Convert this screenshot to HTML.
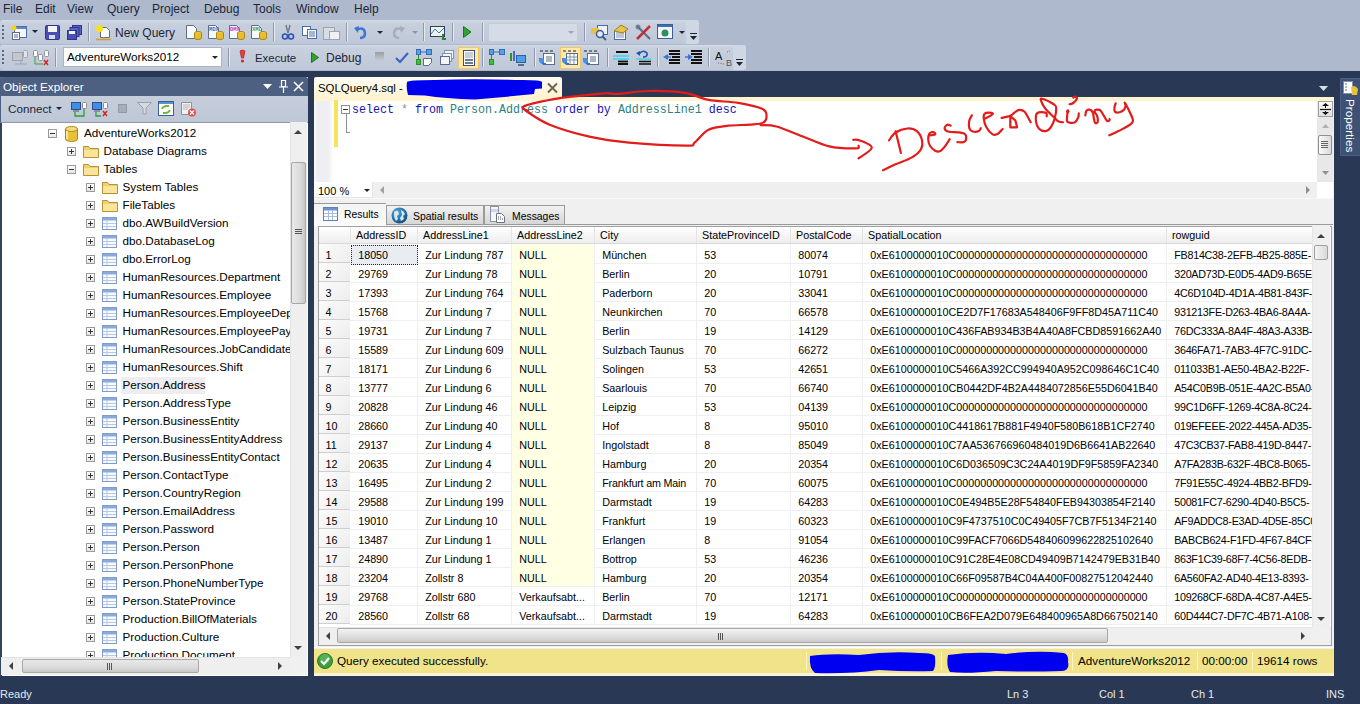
<!DOCTYPE html><html><head><meta charset="utf-8"><style>
*{margin:0;padding:0;box-sizing:border-box}
html,body{width:1360px;height:704px;overflow:hidden;background:#293955;font-family:"Liberation Sans",sans-serif;font-size:11.7px;color:#000}
.a{position:absolute}
.t{position:absolute;white-space:nowrap;line-height:14px}
.menu{color:#1B2637;font-size:12px}
.tb{position:absolute;background:linear-gradient(#D4DBE7,#C8D0DE 3px,#BFC8D8);border-radius:3px}
.sep{position:absolute;width:2px;border-left:1px solid #8E99AE;border-right:1px solid #E6EBF3}
.grip{position:absolute;width:2px;background:repeating-linear-gradient(#5A677D 0 2px,transparent 2px 4px)}
svg{position:absolute;overflow:visible}
.pm{position:absolute;width:9px;height:9px;border:1px solid #9A9A9A;background:linear-gradient(#FFFFFF,#E6E6E6)}
.pm:before{content:"";position:absolute;left:1px;top:3px;width:5px;height:1px;background:#333}
.pm.p:after{content:"";position:absolute;left:3px;top:1px;width:1px;height:5px;background:#333}
.g{position:absolute;white-space:nowrap;font-size:10.75px;line-height:13px;color:#000;transform:scaleY(1.1)}
</style></head><body>
<div class="a" style="left:0;top:0;width:1360px;height:71px;background:#AEB9CD"></div>
<div class="t menu" style="left:3px;top:2px">File</div>
<div class="t menu" style="left:35px;top:2px">Edit</div>
<div class="t menu" style="left:67px;top:2px">View</div>
<div class="t menu" style="left:107px;top:2px">Query</div>
<div class="t menu" style="left:152px;top:2px">Project</div>
<div class="t menu" style="left:204px;top:2px">Debug</div>
<div class="t menu" style="left:253px;top:2px">Tools</div>
<div class="t menu" style="left:296px;top:2px">Window</div>
<div class="t menu" style="left:354px;top:2px">Help</div>
<div class="tb" style="left:0;top:20px;width:699px;height:24px"></div>
<div class="a" style="left:686px;top:20px;width:13px;height:24px;background:#CFD6E4;border-radius:0 3px 3px 0"></div>
<div class="tb" style="left:0;top:45px;width:746px;height:25px"></div>
<div class="a" style="left:733px;top:45px;width:13px;height:25px;background:#CFD6E4;border-radius:0 3px 3px 0"></div>
<div class="grip" style="left:2px;top:25px;height:15px"></div>
<div class="grip" style="left:2px;top:50px;height:15px"></div>
<div class="sep" style="left:88px;top:23px;height:18px"></div>
<div class="sep" style="left:273px;top:23px;height:18px"></div>
<div class="sep" style="left:346px;top:23px;height:18px"></div>
<div class="sep" style="left:423px;top:23px;height:18px"></div>
<div class="sep" style="left:452px;top:23px;height:18px"></div>
<div class="sep" style="left:482px;top:23px;height:18px"></div>
<div class="sep" style="left:584px;top:23px;height:18px"></div>
<div class="sep" style="left:55px;top:48px;height:19px"></div>
<div class="sep" style="left:228px;top:48px;height:19px"></div>
<div class="sep" style="left:482px;top:48px;height:19px"></div>
<div class="sep" style="left:534px;top:48px;height:19px"></div>
<div class="sep" style="left:607px;top:48px;height:19px"></div>
<div class="sep" style="left:657px;top:48px;height:19px"></div>
<div class="sep" style="left:708px;top:48px;height:19px"></div>
<svg style="left:11px;top:25px" width="17" height="15"><rect x="3.5" y="1.5" width="12" height="11" fill="#F4F7FC" stroke="#4F6CA8"/><rect x="4" y="2" width="11" height="2" fill="#5C86D0"/><rect x="1.5" y="7.5" width="7" height="7" fill="#fff" stroke="#5A6C8C"/><path d="M3 10h4M3 12h4" stroke="#5A6C8C"/><circle cx="3" cy="3" r="2.5" fill="#F7D417"/></svg>
<svg style="left:32px;top:30px" width="6" height="4"><path d="M0 0H6L3 3Z" fill="#1B2637"/></svg>
<svg style="left:45px;top:25px" width="15" height="15"><rect x="0.5" y="0.5" width="14" height="14" rx="1" fill="#4850B8" stroke="#2E3590"/><rect x="3" y="1" width="9" height="6" fill="#F2F4FA"/><rect x="4" y="10" width="6" height="4" fill="#D8DBEE"/></svg>
<svg style="left:67px;top:25px" width="15" height="15"><rect x="5.5" y="0.5" width="9" height="9" fill="#5A62C4" stroke="#2E3590"/><rect x="3" y="2.5" width="9" height="9" fill="#5A62C4" stroke="#2E3590"/><rect x="0.5" y="5.5" width="9" height="9" fill="#4850B8" stroke="#2E3590"/><rect x="2" y="6" width="6" height="3" fill="#F2F4FA"/></svg>
<svg style="left:95px;top:24px" width="17" height="17"><path d="M5.5 3.5h6l3 3v7h-9z" fill="#fff" stroke="#6B6B6B"/><circle cx="4.5" cy="4.5" r="3.5" fill="#F9E01E"/><path d="M1 15.5h15" stroke="#C8A23A" stroke-width="1.5"/><path d="M9 13v3" stroke="#C8A23A"/></svg>
<div class="t menu" style="left:115px;top:26px">New Query</div>
<svg style="left:186px;top:25px" width="16" height="15"><path d="M0.5 0.5h7l3 3v10h-10z" fill="#F8F9FC" stroke="#5F6D86"/><ellipse cx="12" cy="8" rx="3.5" ry="1.5" fill="#F2D04A" stroke="#A8861A"/><path d="M8.5 8v5a3.5 1.5 0 0 0 7 0V8" fill="#E8BE2A" stroke="#A8861A"/></svg>
<svg style="left:208px;top:25px" width="16" height="15"><path d="M0.5 0.5h7l3 3v10h-10z" fill="#F8F9FC" stroke="#5F6D86"/><text x="1" y="6" font-family="Liberation Mono" font-size="5.5" font-weight="bold" fill="#3A6FBF">MDX</text><ellipse cx="12" cy="8" rx="3.5" ry="1.5" fill="#F2D04A" stroke="#A8861A"/><path d="M8.5 8v5a3.5 1.5 0 0 0 7 0V8" fill="#E8BE2A" stroke="#A8861A"/></svg>
<svg style="left:229px;top:25px" width="16" height="15"><path d="M0.5 0.5h7l3 3v10h-10z" fill="#F8F9FC" stroke="#5F6D86"/><text x="1" y="6" font-family="Liberation Mono" font-size="5.5" font-weight="bold" fill="#C040C0">DMX</text><ellipse cx="12" cy="8" rx="3.5" ry="1.5" fill="#F2D04A" stroke="#A8861A"/><path d="M8.5 8v5a3.5 1.5 0 0 0 7 0V8" fill="#E8BE2A" stroke="#A8861A"/></svg>
<svg style="left:251px;top:25px" width="16" height="15"><path d="M0.5 0.5h7l3 3v10h-10z" fill="#F8F9FC" stroke="#5F6D86"/><text x="1" y="6" font-family="Liberation Mono" font-size="5.5" font-weight="bold" fill="#3FA050">XML</text><ellipse cx="12" cy="8" rx="3.5" ry="1.5" fill="#F2D04A" stroke="#A8861A"/><path d="M8.5 8v5a3.5 1.5 0 0 0 7 0V8" fill="#E8BE2A" stroke="#A8861A"/></svg>
<svg style="left:282px;top:25px" width="12" height="15"><path d="M4 0L6 8M8 0L6 8" stroke="#6E7D92" stroke-width="1.5"/><circle cx="3" cy="11.5" r="2.5" fill="none" stroke="#2D55B5" stroke-width="1.6"/><circle cx="9" cy="11.5" r="2.5" fill="none" stroke="#2D55B5" stroke-width="1.6"/></svg>
<svg style="left:302px;top:26px" width="15" height="13"><rect x="0.5" y="0.5" width="8" height="9" fill="#fff" stroke="#4A6BA8"/><rect x="5.5" y="3.5" width="9" height="9" fill="#fff" stroke="#4A6BA8"/><path d="M7 6h6M7 8h6M7 10h6" stroke="#4A6BA8"/></svg>
<svg style="left:323px;top:25px" width="17" height="15"><rect x="0.5" y="2.5" width="11" height="12" fill="#D8DCE3" stroke="#9CA3AE"/><rect x="6.5" y="6.5" width="10" height="8" fill="#EEF0F3" stroke="#9CA3AE"/></svg>
<svg style="left:354px;top:25px" width="14" height="15"><path d="M2 5 Q10 1 11 8 Q11 13 6 13" fill="none" stroke="#3F74D0" stroke-width="2.5"/><path d="M0 3L5 1L4 8Z" fill="#3F74D0"/></svg>
<svg style="left:377px;top:31px" width="6" height="4"><path d="M0 0H6L3 3Z" fill="#1B2637"/></svg>
<svg style="left:391px;top:25px" width="14" height="15"><path d="M12 5 Q4 1 3 8 Q3 13 8 13" fill="none" stroke="#A4AEBD" stroke-width="2.5"/><path d="M14 3L9 1L10 8Z" fill="#A4AEBD"/></svg>
<svg style="left:412px;top:31px" width="6" height="4"><path d="M0 0H6L3 3Z" fill="#8A94A4"/></svg>
<svg style="left:430px;top:25px" width="17" height="15"><rect x="0.5" y="1.5" width="14" height="10" fill="#EAF3EA" stroke="#2F3F5F"/><path d="M1 9L5 4L9 8L14 3" stroke="#3F74D0" fill="none"/><path d="M13 9v5h3" stroke="#2F7F2F" stroke-width="2" fill="none"/></svg>
<svg style="left:463px;top:26px" width="9" height="12"><path d="M0.5 0.5L8 6L0.5 11.5Z" fill="#2FA32F" stroke="#1F731F"/></svg>
<div class="a" style="left:488px;top:23px;width:90px;height:19px;background:#D5DCE8;border:1px solid #C4CCDA;border-radius:2px"></div>
<svg style="left:568px;top:31px" width="6" height="4"><path d="M0 0H6L3 3Z" fill="#9AA3B2"/></svg>
<svg style="left:591px;top:25px" width="17" height="16"><rect x="6.5" y="0.5" width="10" height="9" fill="#EEF3FB" stroke="#4A6BA8"/><rect x="0" y="3" width="8" height="6" fill="#E8C24A"/><circle cx="9" cy="9" r="3.5" fill="#DDEBF7" stroke="#3B5E94" stroke-width="1.5"/><path d="M11.5 11.5L15 15" stroke="#3B5E94" stroke-width="2"/></svg>
<svg style="left:612px;top:25px" width="17" height="15"><rect x="2.5" y="5.5" width="11" height="9" fill="#fff" stroke="#4A6BA8"/><path d="M4 8h8M4 10h8M4 12h8" stroke="#7E8CA8"/><path d="M2 6L9 0L16 4L11 8Z" fill="#E8C24A" stroke="#9E7E20"/></svg>
<svg style="left:635px;top:25px" width="17" height="15"><path d="M2 1L15 14" stroke="#5A6C8C" stroke-width="2"/><path d="M15 1L2 14" stroke="#C03030" stroke-width="2.5"/><circle cx="3" cy="2" r="2" fill="none" stroke="#5A6C8C"/></svg>
<svg style="left:657px;top:24px" width="17" height="15"><rect x="0.5" y="0.5" width="15" height="14" fill="#F2F5FA" stroke="#3B5E94"/><rect x="1" y="1" width="14" height="2" fill="#3F6EC0"/><circle cx="8" cy="9" r="3.5" fill="#2F8F5F"/></svg>
<svg style="left:679px;top:31px" width="6" height="4"><path d="M0 0H6L3 3Z" fill="#1B2637"/></svg>
<svg style="left:690px;top:33px" width="8" height="8"><rect x="0" y="0" width="7" height="1" fill="#1B2637"/><path d="M0 3H7L3.5 7Z" fill="#1B2637"/></svg>
<svg style="left:12px;top:50px" width="16" height="15"><rect x="0.5" y="2.5" width="10" height="8" fill="#C4C8CE" stroke="#9CA3AE"/><rect x="11.5" y="0.5" width="4" height="7" rx="1" fill="#E0E3E8" stroke="#A0A6B0"/><path d="M3 14h12M9 11v3" stroke="#9CA3AE"/></svg>
<svg style="left:33px;top:50px" width="16" height="16"><rect x="0.5" y="0.5" width="4" height="6" rx="1" fill="#fff" stroke="#8A9099"/><rect x="5.5" y="4.5" width="4" height="6" rx="1" fill="#fff" stroke="#8A9099"/><rect x="11.5" y="0.5" width="4" height="6" rx="1" fill="#fff" stroke="#8A9099"/><path d="M2 7v7h8" stroke="#3FA03F" fill="none"/><path d="M11 10L15 15M15 10L11 15" stroke="#E02020" stroke-width="1.5"/></svg>
<div class="a" style="left:63px;top:47px;width:159px;height:20px;background:#fff;border:1px solid #A9B4C6"></div>
<div class="t" style="left:67px;top:50px;font-size:11.7px">AdventureWorks2012</div>
<svg style="left:212px;top:56px" width="6" height="4"><path d="M0 0H6L3 3Z" fill="#1B2637"/></svg>
<svg style="left:239px;top:50px" width="7" height="13"><path d="M1 1Q3.5 -1 6 1L4.5 8H2.5Z" fill="#E84040" stroke="#B02020" stroke-width="0.7"/><circle cx="3.5" cy="11" r="1.6" fill="#D03030"/></svg>
<div class="t menu" style="left:255px;top:51px;font-size:11.4px">Execute</div>
<svg style="left:311px;top:52px" width="8" height="11"><path d="M0.5 0.5L7.5 5.5L0.5 10.5Z" fill="#2FA32F" stroke="#1F731F"/></svg>
<div class="t menu" style="left:326px;top:51px">Debug</div>
<div class="a" style="left:375px;top:52px;width:9px;height:9px;background:linear-gradient(#9A9FA8,#C8CCD2)"></div>
<svg style="left:395px;top:52px" width="14" height="12"><path d="M1 6L5 10L13 1" fill="none" stroke="#3B64C4" stroke-width="2.2"/></svg>
<svg style="left:416px;top:49px" width="16" height="17"><rect x="0.5" y="0.5" width="4" height="5" fill="#5AA0E8" stroke="#2F6FB8"/><rect x="10.5" y="0.5" width="5" height="5" fill="#5AA0E8" stroke="#2F6FB8"/><path d="M5 3h5" stroke="#2F6FB8"/><rect x="0.5" y="10.5" width="4" height="5" fill="#3FBF3F" stroke="#2F8F2F"/><path d="M2.5 6v4" stroke="#2F8F2F"/><path d="M7.5 9.5h8v4l-3 3h-5z" fill="#fff" stroke="#5A6C8C"/></svg>
<svg style="left:440px;top:50px" width="14" height="15"><rect x="4.5" y="0.5" width="9" height="8" fill="#F2F5FA" stroke="#7F93B8"/><rect x="2.5" y="3.5" width="9" height="8" fill="#F2F5FA" stroke="#7F93B8"/><rect x="0.5" y="6.5" width="9" height="8" fill="#F2F5FA" stroke="#5A6C8C"/></svg>
<div class="a" style="left:458px;top:47px;width:21px;height:22px;background:#FDE9A8;border:1px solid #F1C565"></div>
<svg style="left:463px;top:50px" width="12" height="16"><rect x="0.5" y="0.5" width="11" height="15" fill="#fff" stroke="#3F4F6F"/><path d="M2 3h8M2 5h8M2 7h8" stroke="#8F9FB8"/><path d="M2 10h8M2 13h8" stroke="#3F4F6F" stroke-width="1.5"/></svg>
<svg style="left:489px;top:49px" width="16" height="17"><rect x="0.5" y="0.5" width="4" height="5" fill="#5AA0E8" stroke="#2F6FB8"/><rect x="10.5" y="0.5" width="5" height="5" fill="#5AA0E8" stroke="#2F6FB8"/><path d="M5 3h5" stroke="#2F6FB8"/><rect x="0.5" y="10.5" width="4" height="5" fill="#3FBF3F" stroke="#2F8F2F"/><path d="M2.5 6v4" stroke="#2F8F2F"/></svg>
<svg style="left:510px;top:50px" width="17" height="16"><rect x="0" y="3" width="2" height="8" fill="#2F8F2F"/><rect x="3" y="1" width="2" height="10" fill="#3F6EC0"/><rect x="6.5" y="5.5" width="9" height="7" fill="#4F9FE8" stroke="#2F5F9F"/><path d="M8 15h6" stroke="#5A6C8C" stroke-width="2"/></svg>
<svg style="left:539px;top:49px" width="17" height="17"><path d="M1 2h3M6 2h3M11 2h3" stroke="#222" stroke-width="1"/><rect x="4.5" y="4.5" width="11" height="11" fill="#fff" stroke="#5A6C8C"/><path d="M7 8h6M7 10h6M7 12h6" stroke="#5A6C8C"/><path d="M1 9Q1 15 7 15" fill="none" stroke="#2F6FD8" stroke-width="2"/><circle cx="2.5" cy="11.5" r="2.5" fill="#4F8FE0"/></svg>
<div class="a" style="left:560px;top:47px;width:21px;height:22px;background:#FDE9A8;border:1px solid #F1C565"></div>
<svg style="left:562px;top:49px" width="17" height="17"><path d="M1 2h3M6 2h3M11 2h3" stroke="#222" stroke-width="1"/><rect x="4.5" y="4.5" width="11" height="11" fill="#fff" stroke="#5A6C8C"/><path d="M5 8h10M5 11h10M8 5v10M12 5v10" stroke="#7F93B8"/><path d="M1 9Q1 15 7 15" fill="none" stroke="#2F6FD8" stroke-width="2"/><circle cx="2.5" cy="11.5" r="2.5" fill="#4F8FE0"/></svg>
<svg style="left:583px;top:49px" width="17" height="17"><path d="M1 2h3M6 2h3M11 2h3" stroke="#222" stroke-width="1"/><rect x="4.5" y="4.5" width="11" height="11" fill="#fff" stroke="#5A6C8C"/><path d="M7 8h6M7 10h6M7 12h6" stroke="#5A6C8C"/><path d="M1 9Q1 15 7 15" fill="none" stroke="#2F6FD8" stroke-width="2"/><circle cx="2.5" cy="11.5" r="2.5" fill="#4F8FE0"/></svg>
<svg style="left:613px;top:51px" width="17" height="14"><path d="M3 1h12M5 13h10" stroke="#111" stroke-width="1.8"/><path d="M0 5h16M0 8h16" stroke="#5FD0E8" stroke-width="1.8"/><path d="M5 10.5h10" stroke="#111" stroke-width="1.8"/></svg>
<svg style="left:635px;top:50px" width="17" height="15"><path d="M4 4 Q8 -1 12 3 Q13 7 8 7" fill="none" stroke="#1F4FB8" stroke-width="1.6"/><path d="M1 3L5 1L5 6Z" fill="#1F4FB8"/><path d="M1 9h15" stroke="#5FD0E8" stroke-width="1.8"/><path d="M4 11.5h12M4 14h12" stroke="#111" stroke-width="1.6"/></svg>
<svg style="left:663px;top:50px" width="17" height="15"><path d="M6 1h11M6 4h11M9 7h8M6 10h11M6 13h11" stroke="#111" stroke-width="1.8"/><path d="M0 7L5 4V10Z" fill="#3F74D0"/><path d="M4 7h4" stroke="#3F74D0" stroke-width="1.5"/></svg>
<svg style="left:685px;top:50px" width="18" height="15"><path d="M6 1h11M6 4h11M9 7h8M6 10h11M6 13h11" stroke="#111" stroke-width="1.8"/><path d="M8 7L3 4V10Z" fill="#3F74D0"/><path d="M0 7h4" stroke="#3F74D0" stroke-width="1.5"/></svg>
<svg style="left:715px;top:50px" width="20" height="17"><text x="0" y="10" font-family="Liberation Sans" font-size="11" fill="#111">A</text><text x="11" y="16" font-family="Liberation Sans" font-size="9" fill="#555">B</text><path d="M12 2l3-1M3 13l6 1" stroke="#666" stroke-dasharray="1 1.5" fill="none"/></svg>
<svg style="left:736px;top:59px" width="8" height="8"><rect x="0" y="0" width="7" height="1" fill="#1B2637"/><path d="M0 3H7L3.5 7Z" fill="#1B2637"/></svg>
<div class="a" style="left:0;top:77px;width:308px;height:599px;background:#fff;border-left:1px solid #4D6082"></div>
<div class="a" style="left:0;top:77px;width:308px;height:19px;background:#4D6082;border-radius:2px 2px 0 0"></div>
<div class="t" style="left:3px;top:80px;color:#fff;font-size:11.7px">Object Explorer</div>
<svg style="left:263px;top:84px" width="9" height="6"><path d="M0 0H9L4.5 5Z" fill="#fff"/></svg>
<svg style="left:279px;top:80px" width="9" height="13"><path d="M2.5 0.5h4v6h-4z M0 7h9 M4.5 7v6" fill="none" stroke="#fff" stroke-width="1.2"/></svg>
<svg style="left:293px;top:81px" width="11" height="11"><path d="M1 1L10 10M10 1L1 10" stroke="#fff" stroke-width="1.5"/></svg>
<div class="a" style="left:0;top:96px;width:308px;height:27px;background:linear-gradient(#C6CEDC,#BEC7D6);border-bottom:1px solid #8E99AC;border-left:1px solid #4D6082"></div>
<div class="t" style="left:8px;top:102px;color:#1B2637;font-size:11.7px">Connect</div>
<svg style="left:56px;top:107px" width="6" height="4"><path d="M0 0H6L3 3Z" fill="#1B2637"/></svg>
<svg style="left:71px;top:102px" width="16" height="15"><rect x="0.5" y="0.5" width="9" height="7" fill="#3F8FE8" stroke="#2F4F8F"/><path d="M2 9h6" stroke="#555"/><rect x="11.5" y="0.5" width="4" height="6" rx="1" fill="#fff" stroke="#888"/><path d="M4 10v4h9V7" stroke="#2F9F2F" fill="none" stroke-width="1.3"/></svg>
<svg style="left:92px;top:102px" width="16" height="15"><rect x="0.5" y="0.5" width="9" height="7" fill="#3F8FE8" stroke="#2F4F8F"/><path d="M2 9h6" stroke="#555"/><rect x="11.5" y="0.5" width="4" height="6" rx="1" fill="#fff" stroke="#888"/><path d="M4 10v4h5" stroke="#2F9F2F" fill="none" stroke-width="1.3"/><path d="M11 9L15 14M15 9L11 14" stroke="#E02020" stroke-width="1.5"/></svg>
<div class="a" style="left:118px;top:104px;width:9px;height:9px;background:#A8AEB8;border:1px solid #9299A4"></div>
<svg style="left:137px;top:102px" width="15" height="13"><path d="M0.5 0.5h14L9 6v6l-3 0V6Z" fill="#D5DAE2" stroke="#9AA1AC"/></svg>
<svg style="left:158px;top:101px" width="17" height="15"><rect x="0.5" y="0.5" width="15" height="14" fill="#fff" stroke="#3B5E94"/><rect x="1" y="1" width="14" height="2" fill="#5B8FD8"/><path d="M4 8Q5 5 9 5L11 5M12 9Q11 12 7 12L5 12" fill="none" stroke="#6FB82F" stroke-width="1.8"/></svg>
<svg style="left:180px;top:101px" width="17" height="16"><path d="M1.5 1.5h10v12h-10z" fill="#F2F2F2" stroke="#8A8F99"/><path d="M3 4h7M3 6h7M3 8h5" stroke="#B0B5BE"/><circle cx="12" cy="11.5" r="4" fill="#E25050"/><path d="M10 9.5L14 13.5M14 9.5L10 13.5" stroke="#fff" stroke-width="1.2"/></svg>
<div class="a" style="left:1px;top:122px;width:289px;height:535px;overflow:hidden">
<div class="pm " style="left:47px;top:7px"></div>
<svg style="left:64px;top:4px" width="13" height="16"><path d="M0.5 3v10a6 2.5 0 0 0 12 0V3" fill="#E9C03A" stroke="#A88A1A"/><ellipse cx="6.5" cy="3" rx="6" ry="2.5" fill="#F6DD7A" stroke="#A88A1A"/><path d="M2 5v8" stroke="#FFF3B0" stroke-width="1.5"/></svg>
<div class="t" style="left:83px;top:4px;font-size:11.7px">AdventureWorks2012</div>
<div class="pm p" style="left:66px;top:25px"></div>
<svg style="left:82px;top:23px" width="16" height="13"><path d="M0.5 1.5h5l1.5 2h8.5v9h-15z" fill="#F0CF6E" stroke="#B8922E"/><path d="M1 5h14v7H1z" fill="#F8E49A"/></svg>
<div class="t" style="left:102.5px;top:22px;font-size:11.7px">Database Diagrams</div>
<div class="pm " style="left:66px;top:43px"></div>
<svg style="left:82px;top:41px" width="16" height="13"><path d="M0.5 1.5h5l1.5 2h8.5v9h-15z" fill="#F0CF6E" stroke="#B8922E"/><path d="M1 5h14v7H1z" fill="#F8E49A"/></svg>
<div class="t" style="left:102.5px;top:40px;font-size:11.7px">Tables</div>
<div class="pm p" style="left:85px;top:61px"></div>
<svg style="left:101px;top:59px" width="16" height="13"><path d="M0.5 1.5h5l1.5 2h8.5v9h-15z" fill="#F0CF6E" stroke="#B8922E"/><path d="M1 5h14v7H1z" fill="#F8E49A"/></svg>
<div class="t" style="left:121.5px;top:58px;font-size:11.7px">System Tables</div>
<div class="pm p" style="left:85px;top:79px"></div>
<svg style="left:101px;top:77px" width="16" height="13"><path d="M0.5 1.5h5l1.5 2h8.5v9h-15z" fill="#F0CF6E" stroke="#B8922E"/><path d="M1 5h14v7H1z" fill="#F8E49A"/></svg>
<div class="t" style="left:121.5px;top:76px;font-size:11.7px">FileTables</div>
<div class="pm p" style="left:85px;top:97px"></div>
<svg style="left:101px;top:95px" width="15" height="13"><rect x="0.5" y="0.5" width="14" height="12" fill="#F8FAFD" stroke="#7F9CCB"/><rect x="1" y="1" width="13" height="2.5" fill="#8AAADC"/><path d="M1 6.5h13M1 9.5h13M5 3v9" stroke="#B8C9E6"/></svg>
<div class="t" style="left:121.5px;top:94px;font-size:11.7px">dbo.AWBuildVersion</div>
<div class="pm p" style="left:85px;top:115px"></div>
<svg style="left:101px;top:113px" width="15" height="13"><rect x="0.5" y="0.5" width="14" height="12" fill="#F8FAFD" stroke="#7F9CCB"/><rect x="1" y="1" width="13" height="2.5" fill="#8AAADC"/><path d="M1 6.5h13M1 9.5h13M5 3v9" stroke="#B8C9E6"/></svg>
<div class="t" style="left:121.5px;top:112px;font-size:11.7px">dbo.DatabaseLog</div>
<div class="pm p" style="left:85px;top:133px"></div>
<svg style="left:101px;top:131px" width="15" height="13"><rect x="0.5" y="0.5" width="14" height="12" fill="#F8FAFD" stroke="#7F9CCB"/><rect x="1" y="1" width="13" height="2.5" fill="#8AAADC"/><path d="M1 6.5h13M1 9.5h13M5 3v9" stroke="#B8C9E6"/></svg>
<div class="t" style="left:121.5px;top:130px;font-size:11.7px">dbo.ErrorLog</div>
<div class="pm p" style="left:85px;top:151px"></div>
<svg style="left:101px;top:149px" width="15" height="13"><rect x="0.5" y="0.5" width="14" height="12" fill="#F8FAFD" stroke="#7F9CCB"/><rect x="1" y="1" width="13" height="2.5" fill="#8AAADC"/><path d="M1 6.5h13M1 9.5h13M5 3v9" stroke="#B8C9E6"/></svg>
<div class="t" style="left:121.5px;top:148px;font-size:11.7px">HumanResources.Department</div>
<div class="pm p" style="left:85px;top:169px"></div>
<svg style="left:101px;top:167px" width="15" height="13"><rect x="0.5" y="0.5" width="14" height="12" fill="#F8FAFD" stroke="#7F9CCB"/><rect x="1" y="1" width="13" height="2.5" fill="#8AAADC"/><path d="M1 6.5h13M1 9.5h13M5 3v9" stroke="#B8C9E6"/></svg>
<div class="t" style="left:121.5px;top:166px;font-size:11.7px">HumanResources.Employee</div>
<div class="pm p" style="left:85px;top:187px"></div>
<svg style="left:101px;top:185px" width="15" height="13"><rect x="0.5" y="0.5" width="14" height="12" fill="#F8FAFD" stroke="#7F9CCB"/><rect x="1" y="1" width="13" height="2.5" fill="#8AAADC"/><path d="M1 6.5h13M1 9.5h13M5 3v9" stroke="#B8C9E6"/></svg>
<div class="t" style="left:121.5px;top:184px;font-size:11.7px">HumanResources.EmployeeDepartmentHistory</div>
<div class="pm p" style="left:85px;top:205px"></div>
<svg style="left:101px;top:203px" width="15" height="13"><rect x="0.5" y="0.5" width="14" height="12" fill="#F8FAFD" stroke="#7F9CCB"/><rect x="1" y="1" width="13" height="2.5" fill="#8AAADC"/><path d="M1 6.5h13M1 9.5h13M5 3v9" stroke="#B8C9E6"/></svg>
<div class="t" style="left:121.5px;top:202px;font-size:11.7px">HumanResources.EmployeePayHistory</div>
<div class="pm p" style="left:85px;top:223px"></div>
<svg style="left:101px;top:221px" width="15" height="13"><rect x="0.5" y="0.5" width="14" height="12" fill="#F8FAFD" stroke="#7F9CCB"/><rect x="1" y="1" width="13" height="2.5" fill="#8AAADC"/><path d="M1 6.5h13M1 9.5h13M5 3v9" stroke="#B8C9E6"/></svg>
<div class="t" style="left:121.5px;top:220px;font-size:11.7px">HumanResources.JobCandidate</div>
<div class="pm p" style="left:85px;top:241px"></div>
<svg style="left:101px;top:239px" width="15" height="13"><rect x="0.5" y="0.5" width="14" height="12" fill="#F8FAFD" stroke="#7F9CCB"/><rect x="1" y="1" width="13" height="2.5" fill="#8AAADC"/><path d="M1 6.5h13M1 9.5h13M5 3v9" stroke="#B8C9E6"/></svg>
<div class="t" style="left:121.5px;top:238px;font-size:11.7px">HumanResources.Shift</div>
<div class="pm p" style="left:85px;top:259px"></div>
<svg style="left:101px;top:257px" width="15" height="13"><rect x="0.5" y="0.5" width="14" height="12" fill="#F8FAFD" stroke="#7F9CCB"/><rect x="1" y="1" width="13" height="2.5" fill="#8AAADC"/><path d="M1 6.5h13M1 9.5h13M5 3v9" stroke="#B8C9E6"/></svg>
<div class="a" style="left:119.5px;top:255px;width:84px;height:17px;background:#EEEEF0"></div>
<div class="t" style="left:121.5px;top:256px;font-size:11.7px">Person.Address</div>
<div class="pm p" style="left:85px;top:277px"></div>
<svg style="left:101px;top:275px" width="15" height="13"><rect x="0.5" y="0.5" width="14" height="12" fill="#F8FAFD" stroke="#7F9CCB"/><rect x="1" y="1" width="13" height="2.5" fill="#8AAADC"/><path d="M1 6.5h13M1 9.5h13M5 3v9" stroke="#B8C9E6"/></svg>
<div class="t" style="left:121.5px;top:274px;font-size:11.7px">Person.AddressType</div>
<div class="pm p" style="left:85px;top:295px"></div>
<svg style="left:101px;top:293px" width="15" height="13"><rect x="0.5" y="0.5" width="14" height="12" fill="#F8FAFD" stroke="#7F9CCB"/><rect x="1" y="1" width="13" height="2.5" fill="#8AAADC"/><path d="M1 6.5h13M1 9.5h13M5 3v9" stroke="#B8C9E6"/></svg>
<div class="t" style="left:121.5px;top:292px;font-size:11.7px">Person.BusinessEntity</div>
<div class="pm p" style="left:85px;top:313px"></div>
<svg style="left:101px;top:311px" width="15" height="13"><rect x="0.5" y="0.5" width="14" height="12" fill="#F8FAFD" stroke="#7F9CCB"/><rect x="1" y="1" width="13" height="2.5" fill="#8AAADC"/><path d="M1 6.5h13M1 9.5h13M5 3v9" stroke="#B8C9E6"/></svg>
<div class="t" style="left:121.5px;top:310px;font-size:11.7px">Person.BusinessEntityAddress</div>
<div class="pm p" style="left:85px;top:331px"></div>
<svg style="left:101px;top:329px" width="15" height="13"><rect x="0.5" y="0.5" width="14" height="12" fill="#F8FAFD" stroke="#7F9CCB"/><rect x="1" y="1" width="13" height="2.5" fill="#8AAADC"/><path d="M1 6.5h13M1 9.5h13M5 3v9" stroke="#B8C9E6"/></svg>
<div class="t" style="left:121.5px;top:328px;font-size:11.7px">Person.BusinessEntityContact</div>
<div class="pm p" style="left:85px;top:349px"></div>
<svg style="left:101px;top:347px" width="15" height="13"><rect x="0.5" y="0.5" width="14" height="12" fill="#F8FAFD" stroke="#7F9CCB"/><rect x="1" y="1" width="13" height="2.5" fill="#8AAADC"/><path d="M1 6.5h13M1 9.5h13M5 3v9" stroke="#B8C9E6"/></svg>
<div class="t" style="left:121.5px;top:346px;font-size:11.7px">Person.ContactType</div>
<div class="pm p" style="left:85px;top:367px"></div>
<svg style="left:101px;top:365px" width="15" height="13"><rect x="0.5" y="0.5" width="14" height="12" fill="#F8FAFD" stroke="#7F9CCB"/><rect x="1" y="1" width="13" height="2.5" fill="#8AAADC"/><path d="M1 6.5h13M1 9.5h13M5 3v9" stroke="#B8C9E6"/></svg>
<div class="t" style="left:121.5px;top:364px;font-size:11.7px">Person.CountryRegion</div>
<div class="pm p" style="left:85px;top:385px"></div>
<svg style="left:101px;top:383px" width="15" height="13"><rect x="0.5" y="0.5" width="14" height="12" fill="#F8FAFD" stroke="#7F9CCB"/><rect x="1" y="1" width="13" height="2.5" fill="#8AAADC"/><path d="M1 6.5h13M1 9.5h13M5 3v9" stroke="#B8C9E6"/></svg>
<div class="t" style="left:121.5px;top:382px;font-size:11.7px">Person.EmailAddress</div>
<div class="pm p" style="left:85px;top:403px"></div>
<svg style="left:101px;top:401px" width="15" height="13"><rect x="0.5" y="0.5" width="14" height="12" fill="#F8FAFD" stroke="#7F9CCB"/><rect x="1" y="1" width="13" height="2.5" fill="#8AAADC"/><path d="M1 6.5h13M1 9.5h13M5 3v9" stroke="#B8C9E6"/></svg>
<div class="t" style="left:121.5px;top:400px;font-size:11.7px">Person.Password</div>
<div class="pm p" style="left:85px;top:421px"></div>
<svg style="left:101px;top:419px" width="15" height="13"><rect x="0.5" y="0.5" width="14" height="12" fill="#F8FAFD" stroke="#7F9CCB"/><rect x="1" y="1" width="13" height="2.5" fill="#8AAADC"/><path d="M1 6.5h13M1 9.5h13M5 3v9" stroke="#B8C9E6"/></svg>
<div class="t" style="left:121.5px;top:418px;font-size:11.7px">Person.Person</div>
<div class="pm p" style="left:85px;top:439px"></div>
<svg style="left:101px;top:437px" width="15" height="13"><rect x="0.5" y="0.5" width="14" height="12" fill="#F8FAFD" stroke="#7F9CCB"/><rect x="1" y="1" width="13" height="2.5" fill="#8AAADC"/><path d="M1 6.5h13M1 9.5h13M5 3v9" stroke="#B8C9E6"/></svg>
<div class="t" style="left:121.5px;top:436px;font-size:11.7px">Person.PersonPhone</div>
<div class="pm p" style="left:85px;top:457px"></div>
<svg style="left:101px;top:455px" width="15" height="13"><rect x="0.5" y="0.5" width="14" height="12" fill="#F8FAFD" stroke="#7F9CCB"/><rect x="1" y="1" width="13" height="2.5" fill="#8AAADC"/><path d="M1 6.5h13M1 9.5h13M5 3v9" stroke="#B8C9E6"/></svg>
<div class="t" style="left:121.5px;top:454px;font-size:11.7px">Person.PhoneNumberType</div>
<div class="pm p" style="left:85px;top:475px"></div>
<svg style="left:101px;top:473px" width="15" height="13"><rect x="0.5" y="0.5" width="14" height="12" fill="#F8FAFD" stroke="#7F9CCB"/><rect x="1" y="1" width="13" height="2.5" fill="#8AAADC"/><path d="M1 6.5h13M1 9.5h13M5 3v9" stroke="#B8C9E6"/></svg>
<div class="t" style="left:121.5px;top:472px;font-size:11.7px">Person.StateProvince</div>
<div class="pm p" style="left:85px;top:493px"></div>
<svg style="left:101px;top:491px" width="15" height="13"><rect x="0.5" y="0.5" width="14" height="12" fill="#F8FAFD" stroke="#7F9CCB"/><rect x="1" y="1" width="13" height="2.5" fill="#8AAADC"/><path d="M1 6.5h13M1 9.5h13M5 3v9" stroke="#B8C9E6"/></svg>
<div class="t" style="left:121.5px;top:490px;font-size:11.7px">Production.BillOfMaterials</div>
<div class="pm p" style="left:85px;top:511px"></div>
<svg style="left:101px;top:509px" width="15" height="13"><rect x="0.5" y="0.5" width="14" height="12" fill="#F8FAFD" stroke="#7F9CCB"/><rect x="1" y="1" width="13" height="2.5" fill="#8AAADC"/><path d="M1 6.5h13M1 9.5h13M5 3v9" stroke="#B8C9E6"/></svg>
<div class="t" style="left:121.5px;top:508px;font-size:11.7px">Production.Culture</div>
<div class="pm p" style="left:85px;top:529px"></div>
<svg style="left:101px;top:527px" width="15" height="13"><rect x="0.5" y="0.5" width="14" height="12" fill="#F8FAFD" stroke="#7F9CCB"/><rect x="1" y="1" width="13" height="2.5" fill="#8AAADC"/><path d="M1 6.5h13M1 9.5h13M5 3v9" stroke="#B8C9E6"/></svg>
<div class="t" style="left:121.5px;top:526px;font-size:11.7px">Production.Document</div>
</div>
<div class="a" style="left:0;top:123px;width:2px;height:553px;background:#34445F"></div>
<div class="a" style="left:290px;top:122px;width:17px;height:535px;background:#EFEFEF;border-left:1px solid #E3E3E3"></div>
<svg style="left:294px;top:130px" width="8" height="4"><path d="M0 4H8L4 0Z" fill="#404040"/></svg>
<svg style="left:294px;top:646px" width="8" height="4"><path d="M0 0H8L4 4Z" fill="#404040"/></svg>
<div class="a" style="left:291px;top:162px;width:15px;height:142px;background:linear-gradient(90deg,#E8E8E8,#DCDCDC 60%,#C8C8C8);border:1px solid #A8A8A8;border-radius:2px"></div>
<svg style="left:295px;top:229px" width="7" height="6"><path d="M0 0.5h7M0 2.5h7M0 4.5h7" stroke="#555"/></svg>
<div class="a" style="left:1px;top:657px;width:306px;height:18px;background:#EFEFEF;border-top:1px solid #E3E3E3"></div>
<svg style="left:9px;top:662px" width="4" height="8"><path d="M4 0V8L0 4Z" fill="#404040"/></svg>
<svg style="left:278px;top:662px" width="4" height="8"><path d="M0 0V8L4 4Z" fill="#404040"/></svg>
<div class="a" style="left:22px;top:659px;width:177px;height:14px;background:linear-gradient(#E8E8E8,#DCDCDC 60%,#C8C8C8);border:1px solid #A8A8A8;border-radius:2px"></div>
<svg style="left:107px;top:663px" width="6" height="7"><path d="M0.5 0v7M2.5 0v7M4.5 0v7" stroke="#555"/></svg>
<div class="a" style="left:290px;top:657px;width:17px;height:18px;background:#F0F0F0"></div>
<div class="a" style="left:314px;top:77px;width:248px;height:21px;background:linear-gradient(#FFFCF4,#FFF3D0);border-radius:2px 2px 0 0"></div>
<div class="t" style="left:318px;top:81px;font-size:11.4px">SQLQuery4.sql -</div>
<svg style="left:547px;top:83px" width="11" height="10"><path d="M1 0.5L10 9.5M10 0.5L1 9.5" stroke="#6B6450" stroke-width="1.9"/></svg>
<svg style="left:1319px;top:86px" width="9" height="6"><path d="M0 0H9L4.5 5Z" fill="#D8DEE8"/></svg>
<div class="a" style="left:314px;top:97px;width:1020px;height:579px;background:#F0F0F0"></div>
<div class="a" style="left:314px;top:97px;width:1020px;height:4px;background:#FFF3D0"></div>
<div class="a" style="left:314px;top:101px;width:1003px;height:81px;background:#fff"></div>
<div class="a" style="left:314px;top:101px;width:19px;height:81px;background:linear-gradient(90deg,#FAFAFA,#EFEFF3 20%,#EFEFF3 75%,#FDFDFD)"></div>
<div class="a" style="left:334px;top:100px;width:4px;height:47px;background:#F7E45A"></div>
<div class="a" style="left:341px;top:105px;width:9px;height:9px;border:1px solid #8F8F8F;background:#fff"></div>
<div class="a" style="left:343px;top:109px;width:5px;height:1px;background:#333"></div>
<div class="a" style="left:346px;top:114px;width:1px;height:19px;background:#909090"></div>
<div class="a" style="left:346px;top:132px;width:4px;height:1px;background:#909090"></div>
<div class="t" style="left:352px;top:102.5px;font-family:'Liberation Mono',monospace;font-size:11.67px;line-height:14px;transform:scaleY(1.12)"><span style="color:#1616B0">select</span> <span style="color:#909090">*</span> <span style="color:#1616B0">from</span> <span style="color:#2D8080">Person.Address</span> <span style="color:#1616B0">order by</span> <span style="color:#2D8080">AddressLine1</span> <span style="color:#1616B0">desc</span></div>
<div class="a" style="left:1317px;top:101px;width:16px;height:81px;background:#E8E8E8"></div>
<div class="a" style="left:1318px;top:101px;width:15px;height:16px;background:linear-gradient(#FAFAFA,#E0E0E0);border:1px solid #A0A0A0"></div>
<svg style="left:1320px;top:103px" width="11" height="13"><path d="M5.5 0L9 3H2Z M5.5 12L9 9H2Z" fill="#111"/><path d="M0 6.5h11" stroke="#111" stroke-width="1.2"/><path d="M5.5 2v3M5.5 8v3" stroke="#111"/></svg>
<svg style="left:1322px;top:124px" width="7" height="4"><path d="M0 4H7L3.5 0Z" fill="#B0B0B0"/></svg>
<div class="a" style="left:1318px;top:135px;width:14px;height:20px;background:linear-gradient(90deg,#FAFAFA,#DADADA);border:1px solid #909090;border-radius:2px"></div>
<svg style="left:1321px;top:141px" width="8" height="8"><path d="M0 0.5h7M0 2.5h7M0 4.5h7M0 6.5h7" stroke="#666"/></svg>
<svg style="left:1322px;top:171px" width="7" height="4"><path d="M0 0H7L3.5 4Z" fill="#909090"/></svg>
<div class="a" style="left:314px;top:182px;width:1003px;height:16px;background:#EFEFEF"></div>
<div class="a" style="left:314px;top:182px;width:59px;height:16px;background:#fff;border-bottom:1px solid #E4E4E4;border-right:1px solid #E4E4E4"></div>
<div class="t" style="left:318px;top:184px;font-size:11px">100 %</div>
<svg style="left:364px;top:189px" width="6" height="4"><path d="M0 0H6L3 3Z" fill="#222"/></svg>
<svg style="left:380px;top:186px" width="4" height="8"><path d="M4 0V8L0 4Z" fill="#A0A0A0"/></svg>
<svg style="left:1306px;top:186px" width="4" height="8"><path d="M0 0V8L4 4Z" fill="#909090"/></svg>
<div class="a" style="left:1317px;top:182px;width:16px;height:16px;background:#fff"></div>
<div class="a" style="left:314px;top:198px;width:1019px;height:1px;background:#F8F8F8"></div>
<div class="a" style="left:386px;top:224px;width:947px;height:1px;background:#9A9A9A"></div>
<div class="a" style="left:386px;top:205px;width:98px;height:20px;background:linear-gradient(#F2F2F2,#D6D6D6);border:1px solid #9A9A9A"></div>
<div class="a" style="left:484px;top:205px;width:81px;height:20px;background:linear-gradient(#F2F2F2,#D6D6D6);border:1px solid #9A9A9A"></div>
<div class="a" style="left:314px;top:203px;width:72px;height:23px;background:linear-gradient(#F4F4F4,#FBFBFB);border-top:1px solid #9A9A9A"></div>
<svg style="left:323px;top:207px" width="15" height="14"><rect x="0.5" y="0.5" width="14" height="13" fill="#fff" stroke="#5F7FB8"/><rect x="1" y="1" width="13" height="2.5" fill="#6F93D0"/><path d="M1 6.5h13M1 9.5h13M5.5 3v10M9.5 3v10" stroke="#A8BDE0"/></svg>
<div class="t" style="left:344px;top:208px;font-size:10.4px">Results</div>
<svg style="left:391px;top:207px" width="17" height="17"><defs><radialGradient id="gl" cx="0.35" cy="0.3" r="0.8"><stop offset="0" stop-color="#4FA8D8"/><stop offset="1" stop-color="#0F4A7A"/></radialGradient></defs><circle cx="8.5" cy="8.5" r="8" fill="url(#gl)"/><path d="M3 5Q5 3 7 4L8 7L6 9L7 12L5 14Q3 11 3 8Z" fill="#D8E8F0"/><path d="M10 3Q13 4 14 7L12 9L13 12L10 14L9 11L11 8Z" fill="#D8E8F0"/></svg>
<div class="t" style="left:413px;top:210px;font-size:10.4px">Spatial results</div>
<svg style="left:490px;top:206px" width="16" height="17"><rect x="0.5" y="0.5" width="8" height="15" fill="#F4F6FA" stroke="#8A94A6"/><rect x="1" y="3" width="7" height="3" fill="#C8D8F0"/><path d="M6.5 7.5h5l3 3v6h-8z" fill="#fff" stroke="#6A7486"/><path d="M8 11h1M10 11h1M8 13h1M10 13h1M12 13h1" stroke="#555"/></svg>
<div class="t" style="left:512px;top:210px;font-size:10.4px">Messages</div>
<div class="a" style="left:318px;top:226px;width:1014px;height:420px;background:#fff;border:1px solid #A0A0A0"></div>
<div class="a" style="left:319px;top:227px;width:993px;height:17px;background:linear-gradient(#FFFFFF,#F4F4F4 60%,#EEEEEE);border-bottom:1px solid #D8D8D8"></div>
<div class="a" style="left:350px;top:227px;width:1px;height:16px;background:#E4E4E4"></div>
<div class="g" style="left:356px;top:229px">AddressID</div>
<div class="a" style="left:417px;top:227px;width:1px;height:16px;background:#E4E4E4"></div>
<div class="g" style="left:423px;top:229px">AddressLine1</div>
<div class="a" style="left:511px;top:227px;width:1px;height:16px;background:#E4E4E4"></div>
<div class="g" style="left:517px;top:229px">AddressLine2</div>
<div class="a" style="left:594px;top:227px;width:1px;height:16px;background:#E4E4E4"></div>
<div class="g" style="left:600px;top:229px">City</div>
<div class="a" style="left:696px;top:227px;width:1px;height:16px;background:#E4E4E4"></div>
<div class="g" style="left:702px;top:229px">StateProvinceID</div>
<div class="a" style="left:790px;top:227px;width:1px;height:16px;background:#E4E4E4"></div>
<div class="g" style="left:796px;top:229px">PostalCode</div>
<div class="a" style="left:862px;top:227px;width:1px;height:16px;background:#E4E4E4"></div>
<div class="g" style="left:868px;top:229px">SpatialLocation</div>
<div class="a" style="left:1166px;top:227px;width:1px;height:16px;background:#E4E4E4"></div>
<div class="g" style="left:1172px;top:229px">rowguid</div>
<div class="a" style="left:319px;top:244px;width:31px;height:19px;background:linear-gradient(135deg,#FCFCFC,#EDEDED);border-bottom:1px solid #CFCFCF"></div>
<div class="g" style="left:325.5px;top:249px">1</div>
<div class="a" style="left:512px;top:244px;width:82px;height:19px;background:#FFFFE3"></div>
<div class="a" style="left:350px;top:263px;width:962px;height:1px;background:#EFEFEF"></div>
<div class="a" style="left:417px;top:244px;width:1px;height:19px;background:#EFEFEF"></div>
<div class="a" style="left:511px;top:244px;width:1px;height:19px;background:#EFEFEF"></div>
<div class="a" style="left:594px;top:244px;width:1px;height:19px;background:#EFEFEF"></div>
<div class="a" style="left:696px;top:244px;width:1px;height:19px;background:#EFEFEF"></div>
<div class="a" style="left:790px;top:244px;width:1px;height:19px;background:#EFEFEF"></div>
<div class="a" style="left:862px;top:244px;width:1px;height:19px;background:#EFEFEF"></div>
<div class="a" style="left:1166px;top:244px;width:1px;height:19px;background:#EFEFEF"></div>
<div class="g" style="left:358.2px;top:249px">18050</div>
<div class="g" style="left:425.2px;top:249px">Zur Lindung 787</div>
<div class="g" style="left:519.2px;top:249px">NULL</div>
<div class="g" style="left:602.2px;top:249px">München</div>
<div class="g" style="left:704.2px;top:249px">53</div>
<div class="g" style="left:798.2px;top:249px">80074</div>
<div class="g" style="left:870.2px;top:249px">0xE6100000010C00000000000000000000000000000000</div>
<div class="g" style="left:1174.2px;top:249px;letter-spacing:-0.25px">FB814C38-2EFB-4B25-885E-</div>
<div class="a" style="left:319px;top:263px;width:31px;height:19px;background:linear-gradient(135deg,#FCFCFC,#EDEDED);border-bottom:1px solid #CFCFCF"></div>
<div class="g" style="left:325.5px;top:268px">2</div>
<div class="a" style="left:512px;top:263px;width:82px;height:19px;background:#FFFFE3"></div>
<div class="a" style="left:350px;top:282px;width:962px;height:1px;background:#EFEFEF"></div>
<div class="a" style="left:417px;top:263px;width:1px;height:19px;background:#EFEFEF"></div>
<div class="a" style="left:511px;top:263px;width:1px;height:19px;background:#EFEFEF"></div>
<div class="a" style="left:594px;top:263px;width:1px;height:19px;background:#EFEFEF"></div>
<div class="a" style="left:696px;top:263px;width:1px;height:19px;background:#EFEFEF"></div>
<div class="a" style="left:790px;top:263px;width:1px;height:19px;background:#EFEFEF"></div>
<div class="a" style="left:862px;top:263px;width:1px;height:19px;background:#EFEFEF"></div>
<div class="a" style="left:1166px;top:263px;width:1px;height:19px;background:#EFEFEF"></div>
<div class="g" style="left:358.2px;top:268px">29769</div>
<div class="g" style="left:425.2px;top:268px">Zur Lindung 78</div>
<div class="g" style="left:519.2px;top:268px">NULL</div>
<div class="g" style="left:602.2px;top:268px">Berlin</div>
<div class="g" style="left:704.2px;top:268px">20</div>
<div class="g" style="left:798.2px;top:268px">10791</div>
<div class="g" style="left:870.2px;top:268px">0xE6100000010C00000000000000000000000000000000</div>
<div class="g" style="left:1174.2px;top:268px;letter-spacing:-0.25px">320AD73D-E0D5-4AD9-B65E-</div>
<div class="a" style="left:319px;top:282px;width:31px;height:19px;background:linear-gradient(135deg,#FCFCFC,#EDEDED);border-bottom:1px solid #CFCFCF"></div>
<div class="g" style="left:325.5px;top:287px">3</div>
<div class="a" style="left:512px;top:282px;width:82px;height:19px;background:#FFFFE3"></div>
<div class="a" style="left:350px;top:301px;width:962px;height:1px;background:#EFEFEF"></div>
<div class="a" style="left:417px;top:282px;width:1px;height:19px;background:#EFEFEF"></div>
<div class="a" style="left:511px;top:282px;width:1px;height:19px;background:#EFEFEF"></div>
<div class="a" style="left:594px;top:282px;width:1px;height:19px;background:#EFEFEF"></div>
<div class="a" style="left:696px;top:282px;width:1px;height:19px;background:#EFEFEF"></div>
<div class="a" style="left:790px;top:282px;width:1px;height:19px;background:#EFEFEF"></div>
<div class="a" style="left:862px;top:282px;width:1px;height:19px;background:#EFEFEF"></div>
<div class="a" style="left:1166px;top:282px;width:1px;height:19px;background:#EFEFEF"></div>
<div class="g" style="left:358.2px;top:287px">17393</div>
<div class="g" style="left:425.2px;top:287px">Zur Lindung 764</div>
<div class="g" style="left:519.2px;top:287px">NULL</div>
<div class="g" style="left:602.2px;top:287px">Paderborn</div>
<div class="g" style="left:704.2px;top:287px">20</div>
<div class="g" style="left:798.2px;top:287px">33041</div>
<div class="g" style="left:870.2px;top:287px">0xE6100000010C00000000000000000000000000000000</div>
<div class="g" style="left:1174.2px;top:287px;letter-spacing:-0.25px">4C6D104D-4D1A-4B81-843F-</div>
<div class="a" style="left:319px;top:301px;width:31px;height:19px;background:linear-gradient(135deg,#FCFCFC,#EDEDED);border-bottom:1px solid #CFCFCF"></div>
<div class="g" style="left:325.5px;top:306px">4</div>
<div class="a" style="left:512px;top:301px;width:82px;height:19px;background:#FFFFE3"></div>
<div class="a" style="left:350px;top:320px;width:962px;height:1px;background:#EFEFEF"></div>
<div class="a" style="left:417px;top:301px;width:1px;height:19px;background:#EFEFEF"></div>
<div class="a" style="left:511px;top:301px;width:1px;height:19px;background:#EFEFEF"></div>
<div class="a" style="left:594px;top:301px;width:1px;height:19px;background:#EFEFEF"></div>
<div class="a" style="left:696px;top:301px;width:1px;height:19px;background:#EFEFEF"></div>
<div class="a" style="left:790px;top:301px;width:1px;height:19px;background:#EFEFEF"></div>
<div class="a" style="left:862px;top:301px;width:1px;height:19px;background:#EFEFEF"></div>
<div class="a" style="left:1166px;top:301px;width:1px;height:19px;background:#EFEFEF"></div>
<div class="g" style="left:358.2px;top:306px">15768</div>
<div class="g" style="left:425.2px;top:306px">Zur Lindung 7</div>
<div class="g" style="left:519.2px;top:306px">NULL</div>
<div class="g" style="left:602.2px;top:306px">Neunkirchen</div>
<div class="g" style="left:704.2px;top:306px">70</div>
<div class="g" style="left:798.2px;top:306px">66578</div>
<div class="g" style="left:870.2px;top:306px">0xE6100000010CE2D7F17683A548406F9FF8D45A711C40</div>
<div class="g" style="left:1174.2px;top:306px;letter-spacing:-0.25px">931213FE-D263-4BA6-8A4A-</div>
<div class="a" style="left:319px;top:320px;width:31px;height:19px;background:linear-gradient(135deg,#FCFCFC,#EDEDED);border-bottom:1px solid #CFCFCF"></div>
<div class="g" style="left:325.5px;top:325px">5</div>
<div class="a" style="left:512px;top:320px;width:82px;height:19px;background:#FFFFE3"></div>
<div class="a" style="left:350px;top:339px;width:962px;height:1px;background:#EFEFEF"></div>
<div class="a" style="left:417px;top:320px;width:1px;height:19px;background:#EFEFEF"></div>
<div class="a" style="left:511px;top:320px;width:1px;height:19px;background:#EFEFEF"></div>
<div class="a" style="left:594px;top:320px;width:1px;height:19px;background:#EFEFEF"></div>
<div class="a" style="left:696px;top:320px;width:1px;height:19px;background:#EFEFEF"></div>
<div class="a" style="left:790px;top:320px;width:1px;height:19px;background:#EFEFEF"></div>
<div class="a" style="left:862px;top:320px;width:1px;height:19px;background:#EFEFEF"></div>
<div class="a" style="left:1166px;top:320px;width:1px;height:19px;background:#EFEFEF"></div>
<div class="g" style="left:358.2px;top:325px">19731</div>
<div class="g" style="left:425.2px;top:325px">Zur Lindung 7</div>
<div class="g" style="left:519.2px;top:325px">NULL</div>
<div class="g" style="left:602.2px;top:325px">Berlin</div>
<div class="g" style="left:704.2px;top:325px">19</div>
<div class="g" style="left:798.2px;top:325px">14129</div>
<div class="g" style="left:870.2px;top:325px">0xE6100000010C436FAB934B3B4A40A8FCBD8591662A40</div>
<div class="g" style="left:1174.2px;top:325px;letter-spacing:-0.25px">76DC333A-8A4F-48A3-A33B-</div>
<div class="a" style="left:319px;top:339px;width:31px;height:19px;background:linear-gradient(135deg,#FCFCFC,#EDEDED);border-bottom:1px solid #CFCFCF"></div>
<div class="g" style="left:325.5px;top:344px">6</div>
<div class="a" style="left:512px;top:339px;width:82px;height:19px;background:#FFFFE3"></div>
<div class="a" style="left:350px;top:358px;width:962px;height:1px;background:#EFEFEF"></div>
<div class="a" style="left:417px;top:339px;width:1px;height:19px;background:#EFEFEF"></div>
<div class="a" style="left:511px;top:339px;width:1px;height:19px;background:#EFEFEF"></div>
<div class="a" style="left:594px;top:339px;width:1px;height:19px;background:#EFEFEF"></div>
<div class="a" style="left:696px;top:339px;width:1px;height:19px;background:#EFEFEF"></div>
<div class="a" style="left:790px;top:339px;width:1px;height:19px;background:#EFEFEF"></div>
<div class="a" style="left:862px;top:339px;width:1px;height:19px;background:#EFEFEF"></div>
<div class="a" style="left:1166px;top:339px;width:1px;height:19px;background:#EFEFEF"></div>
<div class="g" style="left:358.2px;top:344px">15589</div>
<div class="g" style="left:425.2px;top:344px">Zur Lindung 609</div>
<div class="g" style="left:519.2px;top:344px">NULL</div>
<div class="g" style="left:602.2px;top:344px">Sulzbach Taunus</div>
<div class="g" style="left:704.2px;top:344px">70</div>
<div class="g" style="left:798.2px;top:344px">66272</div>
<div class="g" style="left:870.2px;top:344px">0xE6100000010C00000000000000000000000000000000</div>
<div class="g" style="left:1174.2px;top:344px;letter-spacing:-0.25px">3646FA71-7AB3-4F7C-91DC-</div>
<div class="a" style="left:319px;top:358px;width:31px;height:19px;background:linear-gradient(135deg,#FCFCFC,#EDEDED);border-bottom:1px solid #CFCFCF"></div>
<div class="g" style="left:325.5px;top:363px">7</div>
<div class="a" style="left:512px;top:358px;width:82px;height:19px;background:#FFFFE3"></div>
<div class="a" style="left:350px;top:377px;width:962px;height:1px;background:#EFEFEF"></div>
<div class="a" style="left:417px;top:358px;width:1px;height:19px;background:#EFEFEF"></div>
<div class="a" style="left:511px;top:358px;width:1px;height:19px;background:#EFEFEF"></div>
<div class="a" style="left:594px;top:358px;width:1px;height:19px;background:#EFEFEF"></div>
<div class="a" style="left:696px;top:358px;width:1px;height:19px;background:#EFEFEF"></div>
<div class="a" style="left:790px;top:358px;width:1px;height:19px;background:#EFEFEF"></div>
<div class="a" style="left:862px;top:358px;width:1px;height:19px;background:#EFEFEF"></div>
<div class="a" style="left:1166px;top:358px;width:1px;height:19px;background:#EFEFEF"></div>
<div class="g" style="left:358.2px;top:363px">18171</div>
<div class="g" style="left:425.2px;top:363px">Zur Lindung 6</div>
<div class="g" style="left:519.2px;top:363px">NULL</div>
<div class="g" style="left:602.2px;top:363px">Solingen</div>
<div class="g" style="left:704.2px;top:363px">53</div>
<div class="g" style="left:798.2px;top:363px">42651</div>
<div class="g" style="left:870.2px;top:363px">0xE6100000010C5466A392CC994940A952C098646C1C40</div>
<div class="g" style="left:1174.2px;top:363px;letter-spacing:-0.25px">011033B1-AE50-4BA2-B22F-</div>
<div class="a" style="left:319px;top:377px;width:31px;height:19px;background:linear-gradient(135deg,#FCFCFC,#EDEDED);border-bottom:1px solid #CFCFCF"></div>
<div class="g" style="left:325.5px;top:382px">8</div>
<div class="a" style="left:512px;top:377px;width:82px;height:19px;background:#FFFFE3"></div>
<div class="a" style="left:350px;top:396px;width:962px;height:1px;background:#EFEFEF"></div>
<div class="a" style="left:417px;top:377px;width:1px;height:19px;background:#EFEFEF"></div>
<div class="a" style="left:511px;top:377px;width:1px;height:19px;background:#EFEFEF"></div>
<div class="a" style="left:594px;top:377px;width:1px;height:19px;background:#EFEFEF"></div>
<div class="a" style="left:696px;top:377px;width:1px;height:19px;background:#EFEFEF"></div>
<div class="a" style="left:790px;top:377px;width:1px;height:19px;background:#EFEFEF"></div>
<div class="a" style="left:862px;top:377px;width:1px;height:19px;background:#EFEFEF"></div>
<div class="a" style="left:1166px;top:377px;width:1px;height:19px;background:#EFEFEF"></div>
<div class="g" style="left:358.2px;top:382px">13777</div>
<div class="g" style="left:425.2px;top:382px">Zur Lindung 6</div>
<div class="g" style="left:519.2px;top:382px">NULL</div>
<div class="g" style="left:602.2px;top:382px">Saarlouis</div>
<div class="g" style="left:704.2px;top:382px">70</div>
<div class="g" style="left:798.2px;top:382px">66740</div>
<div class="g" style="left:870.2px;top:382px">0xE6100000010CB0442DF4B2A4484072856E55D6041B40</div>
<div class="g" style="left:1174.2px;top:382px;letter-spacing:-0.25px">A54C0B9B-051E-4A2C-B5A0-</div>
<div class="a" style="left:319px;top:396px;width:31px;height:19px;background:linear-gradient(135deg,#FCFCFC,#EDEDED);border-bottom:1px solid #CFCFCF"></div>
<div class="g" style="left:325.5px;top:401px">9</div>
<div class="a" style="left:512px;top:396px;width:82px;height:19px;background:#FFFFE3"></div>
<div class="a" style="left:350px;top:415px;width:962px;height:1px;background:#EFEFEF"></div>
<div class="a" style="left:417px;top:396px;width:1px;height:19px;background:#EFEFEF"></div>
<div class="a" style="left:511px;top:396px;width:1px;height:19px;background:#EFEFEF"></div>
<div class="a" style="left:594px;top:396px;width:1px;height:19px;background:#EFEFEF"></div>
<div class="a" style="left:696px;top:396px;width:1px;height:19px;background:#EFEFEF"></div>
<div class="a" style="left:790px;top:396px;width:1px;height:19px;background:#EFEFEF"></div>
<div class="a" style="left:862px;top:396px;width:1px;height:19px;background:#EFEFEF"></div>
<div class="a" style="left:1166px;top:396px;width:1px;height:19px;background:#EFEFEF"></div>
<div class="g" style="left:358.2px;top:401px">20828</div>
<div class="g" style="left:425.2px;top:401px">Zur Lindung 46</div>
<div class="g" style="left:519.2px;top:401px">NULL</div>
<div class="g" style="left:602.2px;top:401px">Leipzig</div>
<div class="g" style="left:704.2px;top:401px">53</div>
<div class="g" style="left:798.2px;top:401px">04139</div>
<div class="g" style="left:870.2px;top:401px">0xE6100000010C00000000000000000000000000000000</div>
<div class="g" style="left:1174.2px;top:401px;letter-spacing:-0.25px">99C1D6FF-1269-4C8A-8C24-</div>
<div class="a" style="left:319px;top:415px;width:31px;height:19px;background:linear-gradient(135deg,#FCFCFC,#EDEDED);border-bottom:1px solid #CFCFCF"></div>
<div class="g" style="left:325.5px;top:420px">10</div>
<div class="a" style="left:512px;top:415px;width:82px;height:19px;background:#FFFFE3"></div>
<div class="a" style="left:350px;top:434px;width:962px;height:1px;background:#EFEFEF"></div>
<div class="a" style="left:417px;top:415px;width:1px;height:19px;background:#EFEFEF"></div>
<div class="a" style="left:511px;top:415px;width:1px;height:19px;background:#EFEFEF"></div>
<div class="a" style="left:594px;top:415px;width:1px;height:19px;background:#EFEFEF"></div>
<div class="a" style="left:696px;top:415px;width:1px;height:19px;background:#EFEFEF"></div>
<div class="a" style="left:790px;top:415px;width:1px;height:19px;background:#EFEFEF"></div>
<div class="a" style="left:862px;top:415px;width:1px;height:19px;background:#EFEFEF"></div>
<div class="a" style="left:1166px;top:415px;width:1px;height:19px;background:#EFEFEF"></div>
<div class="g" style="left:358.2px;top:420px">28660</div>
<div class="g" style="left:425.2px;top:420px">Zur Lindung 40</div>
<div class="g" style="left:519.2px;top:420px">NULL</div>
<div class="g" style="left:602.2px;top:420px">Hof</div>
<div class="g" style="left:704.2px;top:420px">8</div>
<div class="g" style="left:798.2px;top:420px">95010</div>
<div class="g" style="left:870.2px;top:420px">0xE6100000010C4418617B881F4940F580B618B1CF2740</div>
<div class="g" style="left:1174.2px;top:420px;letter-spacing:-0.25px">019EFEEE-2022-445A-AD35-</div>
<div class="a" style="left:319px;top:434px;width:31px;height:19px;background:linear-gradient(135deg,#FCFCFC,#EDEDED);border-bottom:1px solid #CFCFCF"></div>
<div class="g" style="left:325.5px;top:439px">11</div>
<div class="a" style="left:512px;top:434px;width:82px;height:19px;background:#FFFFE3"></div>
<div class="a" style="left:350px;top:453px;width:962px;height:1px;background:#EFEFEF"></div>
<div class="a" style="left:417px;top:434px;width:1px;height:19px;background:#EFEFEF"></div>
<div class="a" style="left:511px;top:434px;width:1px;height:19px;background:#EFEFEF"></div>
<div class="a" style="left:594px;top:434px;width:1px;height:19px;background:#EFEFEF"></div>
<div class="a" style="left:696px;top:434px;width:1px;height:19px;background:#EFEFEF"></div>
<div class="a" style="left:790px;top:434px;width:1px;height:19px;background:#EFEFEF"></div>
<div class="a" style="left:862px;top:434px;width:1px;height:19px;background:#EFEFEF"></div>
<div class="a" style="left:1166px;top:434px;width:1px;height:19px;background:#EFEFEF"></div>
<div class="g" style="left:358.2px;top:439px">29137</div>
<div class="g" style="left:425.2px;top:439px">Zur Lindung 4</div>
<div class="g" style="left:519.2px;top:439px">NULL</div>
<div class="g" style="left:602.2px;top:439px">Ingolstadt</div>
<div class="g" style="left:704.2px;top:439px">8</div>
<div class="g" style="left:798.2px;top:439px">85049</div>
<div class="g" style="left:870.2px;top:439px">0xE6100000010C7AA536766960484019D6B6641AB22640</div>
<div class="g" style="left:1174.2px;top:439px;letter-spacing:-0.25px">47C3CB37-FAB8-419D-8447-</div>
<div class="a" style="left:319px;top:453px;width:31px;height:19px;background:linear-gradient(135deg,#FCFCFC,#EDEDED);border-bottom:1px solid #CFCFCF"></div>
<div class="g" style="left:325.5px;top:458px">12</div>
<div class="a" style="left:512px;top:453px;width:82px;height:19px;background:#FFFFE3"></div>
<div class="a" style="left:350px;top:472px;width:962px;height:1px;background:#EFEFEF"></div>
<div class="a" style="left:417px;top:453px;width:1px;height:19px;background:#EFEFEF"></div>
<div class="a" style="left:511px;top:453px;width:1px;height:19px;background:#EFEFEF"></div>
<div class="a" style="left:594px;top:453px;width:1px;height:19px;background:#EFEFEF"></div>
<div class="a" style="left:696px;top:453px;width:1px;height:19px;background:#EFEFEF"></div>
<div class="a" style="left:790px;top:453px;width:1px;height:19px;background:#EFEFEF"></div>
<div class="a" style="left:862px;top:453px;width:1px;height:19px;background:#EFEFEF"></div>
<div class="a" style="left:1166px;top:453px;width:1px;height:19px;background:#EFEFEF"></div>
<div class="g" style="left:358.2px;top:458px">20635</div>
<div class="g" style="left:425.2px;top:458px">Zur Lindung 4</div>
<div class="g" style="left:519.2px;top:458px">NULL</div>
<div class="g" style="left:602.2px;top:458px">Hamburg</div>
<div class="g" style="left:704.2px;top:458px">20</div>
<div class="g" style="left:798.2px;top:458px">20354</div>
<div class="g" style="left:870.2px;top:458px">0xE6100000010C6D036509C3C24A4019DF9F5859FA2340</div>
<div class="g" style="left:1174.2px;top:458px;letter-spacing:-0.25px">A7FA283B-632F-4BC8-B065-</div>
<div class="a" style="left:319px;top:472px;width:31px;height:19px;background:linear-gradient(135deg,#FCFCFC,#EDEDED);border-bottom:1px solid #CFCFCF"></div>
<div class="g" style="left:325.5px;top:477px">13</div>
<div class="a" style="left:512px;top:472px;width:82px;height:19px;background:#FFFFE3"></div>
<div class="a" style="left:350px;top:491px;width:962px;height:1px;background:#EFEFEF"></div>
<div class="a" style="left:417px;top:472px;width:1px;height:19px;background:#EFEFEF"></div>
<div class="a" style="left:511px;top:472px;width:1px;height:19px;background:#EFEFEF"></div>
<div class="a" style="left:594px;top:472px;width:1px;height:19px;background:#EFEFEF"></div>
<div class="a" style="left:696px;top:472px;width:1px;height:19px;background:#EFEFEF"></div>
<div class="a" style="left:790px;top:472px;width:1px;height:19px;background:#EFEFEF"></div>
<div class="a" style="left:862px;top:472px;width:1px;height:19px;background:#EFEFEF"></div>
<div class="a" style="left:1166px;top:472px;width:1px;height:19px;background:#EFEFEF"></div>
<div class="g" style="left:358.2px;top:477px">16495</div>
<div class="g" style="left:425.2px;top:477px">Zur Lindung 2</div>
<div class="g" style="left:519.2px;top:477px">NULL</div>
<div class="g" style="left:602.2px;top:477px;letter-spacing:-0.2px">Frankfurt am Main</div>
<div class="g" style="left:704.2px;top:477px">70</div>
<div class="g" style="left:798.2px;top:477px">60075</div>
<div class="g" style="left:870.2px;top:477px">0xE6100000010C00000000000000000000000000000000</div>
<div class="g" style="left:1174.2px;top:477px;letter-spacing:-0.25px">7F91E55C-4924-4BB2-BFD9-</div>
<div class="a" style="left:319px;top:491px;width:31px;height:19px;background:linear-gradient(135deg,#FCFCFC,#EDEDED);border-bottom:1px solid #CFCFCF"></div>
<div class="g" style="left:325.5px;top:496px">14</div>
<div class="a" style="left:512px;top:491px;width:82px;height:19px;background:#FFFFE3"></div>
<div class="a" style="left:350px;top:510px;width:962px;height:1px;background:#EFEFEF"></div>
<div class="a" style="left:417px;top:491px;width:1px;height:19px;background:#EFEFEF"></div>
<div class="a" style="left:511px;top:491px;width:1px;height:19px;background:#EFEFEF"></div>
<div class="a" style="left:594px;top:491px;width:1px;height:19px;background:#EFEFEF"></div>
<div class="a" style="left:696px;top:491px;width:1px;height:19px;background:#EFEFEF"></div>
<div class="a" style="left:790px;top:491px;width:1px;height:19px;background:#EFEFEF"></div>
<div class="a" style="left:862px;top:491px;width:1px;height:19px;background:#EFEFEF"></div>
<div class="a" style="left:1166px;top:491px;width:1px;height:19px;background:#EFEFEF"></div>
<div class="g" style="left:358.2px;top:496px">29588</div>
<div class="g" style="left:425.2px;top:496px">Zur Lindung 199</div>
<div class="g" style="left:519.2px;top:496px">NULL</div>
<div class="g" style="left:602.2px;top:496px">Darmstadt</div>
<div class="g" style="left:704.2px;top:496px">19</div>
<div class="g" style="left:798.2px;top:496px">64283</div>
<div class="g" style="left:870.2px;top:496px">0xE6100000010C0E494B5E28F54840FEB94303854F2140</div>
<div class="g" style="left:1174.2px;top:496px;letter-spacing:-0.25px">50081FC7-6290-4D40-B5C5-</div>
<div class="a" style="left:319px;top:510px;width:31px;height:19px;background:linear-gradient(135deg,#FCFCFC,#EDEDED);border-bottom:1px solid #CFCFCF"></div>
<div class="g" style="left:325.5px;top:515px">15</div>
<div class="a" style="left:512px;top:510px;width:82px;height:19px;background:#FFFFE3"></div>
<div class="a" style="left:350px;top:529px;width:962px;height:1px;background:#EFEFEF"></div>
<div class="a" style="left:417px;top:510px;width:1px;height:19px;background:#EFEFEF"></div>
<div class="a" style="left:511px;top:510px;width:1px;height:19px;background:#EFEFEF"></div>
<div class="a" style="left:594px;top:510px;width:1px;height:19px;background:#EFEFEF"></div>
<div class="a" style="left:696px;top:510px;width:1px;height:19px;background:#EFEFEF"></div>
<div class="a" style="left:790px;top:510px;width:1px;height:19px;background:#EFEFEF"></div>
<div class="a" style="left:862px;top:510px;width:1px;height:19px;background:#EFEFEF"></div>
<div class="a" style="left:1166px;top:510px;width:1px;height:19px;background:#EFEFEF"></div>
<div class="g" style="left:358.2px;top:515px">19010</div>
<div class="g" style="left:425.2px;top:515px">Zur Lindung 10</div>
<div class="g" style="left:519.2px;top:515px">NULL</div>
<div class="g" style="left:602.2px;top:515px">Frankfurt</div>
<div class="g" style="left:704.2px;top:515px">19</div>
<div class="g" style="left:798.2px;top:515px">60323</div>
<div class="g" style="left:870.2px;top:515px">0xE6100000010C9F4737510C0C49405F7CB7F5134F2140</div>
<div class="g" style="left:1174.2px;top:515px;letter-spacing:-0.25px">AF9ADDC8-E3AD-4D5E-85C0-</div>
<div class="a" style="left:319px;top:529px;width:31px;height:19px;background:linear-gradient(135deg,#FCFCFC,#EDEDED);border-bottom:1px solid #CFCFCF"></div>
<div class="g" style="left:325.5px;top:534px">16</div>
<div class="a" style="left:512px;top:529px;width:82px;height:19px;background:#FFFFE3"></div>
<div class="a" style="left:350px;top:548px;width:962px;height:1px;background:#EFEFEF"></div>
<div class="a" style="left:417px;top:529px;width:1px;height:19px;background:#EFEFEF"></div>
<div class="a" style="left:511px;top:529px;width:1px;height:19px;background:#EFEFEF"></div>
<div class="a" style="left:594px;top:529px;width:1px;height:19px;background:#EFEFEF"></div>
<div class="a" style="left:696px;top:529px;width:1px;height:19px;background:#EFEFEF"></div>
<div class="a" style="left:790px;top:529px;width:1px;height:19px;background:#EFEFEF"></div>
<div class="a" style="left:862px;top:529px;width:1px;height:19px;background:#EFEFEF"></div>
<div class="a" style="left:1166px;top:529px;width:1px;height:19px;background:#EFEFEF"></div>
<div class="g" style="left:358.2px;top:534px">13487</div>
<div class="g" style="left:425.2px;top:534px">Zur Lindung 1</div>
<div class="g" style="left:519.2px;top:534px">NULL</div>
<div class="g" style="left:602.2px;top:534px">Erlangen</div>
<div class="g" style="left:704.2px;top:534px">8</div>
<div class="g" style="left:798.2px;top:534px">91054</div>
<div class="g" style="left:870.2px;top:534px">0xE6100000010C99FACF7066D548406099622825102640</div>
<div class="g" style="left:1174.2px;top:534px;letter-spacing:-0.25px">BABCB624-F1FD-4F67-84CF-</div>
<div class="a" style="left:319px;top:548px;width:31px;height:19px;background:linear-gradient(135deg,#FCFCFC,#EDEDED);border-bottom:1px solid #CFCFCF"></div>
<div class="g" style="left:325.5px;top:553px">17</div>
<div class="a" style="left:512px;top:548px;width:82px;height:19px;background:#FFFFE3"></div>
<div class="a" style="left:350px;top:567px;width:962px;height:1px;background:#EFEFEF"></div>
<div class="a" style="left:417px;top:548px;width:1px;height:19px;background:#EFEFEF"></div>
<div class="a" style="left:511px;top:548px;width:1px;height:19px;background:#EFEFEF"></div>
<div class="a" style="left:594px;top:548px;width:1px;height:19px;background:#EFEFEF"></div>
<div class="a" style="left:696px;top:548px;width:1px;height:19px;background:#EFEFEF"></div>
<div class="a" style="left:790px;top:548px;width:1px;height:19px;background:#EFEFEF"></div>
<div class="a" style="left:862px;top:548px;width:1px;height:19px;background:#EFEFEF"></div>
<div class="a" style="left:1166px;top:548px;width:1px;height:19px;background:#EFEFEF"></div>
<div class="g" style="left:358.2px;top:553px">24890</div>
<div class="g" style="left:425.2px;top:553px">Zur Lindung 1</div>
<div class="g" style="left:519.2px;top:553px">NULL</div>
<div class="g" style="left:602.2px;top:553px">Bottrop</div>
<div class="g" style="left:704.2px;top:553px">53</div>
<div class="g" style="left:798.2px;top:553px">46236</div>
<div class="g" style="left:870.2px;top:553px">0xE6100000010C91C28E4E08CD49409B7142479EB31B40</div>
<div class="g" style="left:1174.2px;top:553px;letter-spacing:-0.25px">863F1C39-68F7-4C56-8EDB-</div>
<div class="a" style="left:319px;top:567px;width:31px;height:19px;background:linear-gradient(135deg,#FCFCFC,#EDEDED);border-bottom:1px solid #CFCFCF"></div>
<div class="g" style="left:325.5px;top:572px">18</div>
<div class="a" style="left:512px;top:567px;width:82px;height:19px;background:#FFFFE3"></div>
<div class="a" style="left:350px;top:586px;width:962px;height:1px;background:#EFEFEF"></div>
<div class="a" style="left:417px;top:567px;width:1px;height:19px;background:#EFEFEF"></div>
<div class="a" style="left:511px;top:567px;width:1px;height:19px;background:#EFEFEF"></div>
<div class="a" style="left:594px;top:567px;width:1px;height:19px;background:#EFEFEF"></div>
<div class="a" style="left:696px;top:567px;width:1px;height:19px;background:#EFEFEF"></div>
<div class="a" style="left:790px;top:567px;width:1px;height:19px;background:#EFEFEF"></div>
<div class="a" style="left:862px;top:567px;width:1px;height:19px;background:#EFEFEF"></div>
<div class="a" style="left:1166px;top:567px;width:1px;height:19px;background:#EFEFEF"></div>
<div class="g" style="left:358.2px;top:572px">23204</div>
<div class="g" style="left:425.2px;top:572px">Zollstr 8</div>
<div class="g" style="left:519.2px;top:572px">NULL</div>
<div class="g" style="left:602.2px;top:572px">Hamburg</div>
<div class="g" style="left:704.2px;top:572px">20</div>
<div class="g" style="left:798.2px;top:572px">20354</div>
<div class="g" style="left:870.2px;top:572px">0xE6100000010C66F09587B4C04A400F00827512042440</div>
<div class="g" style="left:1174.2px;top:572px;letter-spacing:-0.25px">6A560FA2-AD40-4E13-8393-</div>
<div class="a" style="left:319px;top:586px;width:31px;height:19px;background:linear-gradient(135deg,#FCFCFC,#EDEDED);border-bottom:1px solid #CFCFCF"></div>
<div class="g" style="left:325.5px;top:591px">19</div>
<div class="a" style="left:350px;top:605px;width:962px;height:1px;background:#EFEFEF"></div>
<div class="a" style="left:417px;top:586px;width:1px;height:19px;background:#EFEFEF"></div>
<div class="a" style="left:511px;top:586px;width:1px;height:19px;background:#EFEFEF"></div>
<div class="a" style="left:594px;top:586px;width:1px;height:19px;background:#EFEFEF"></div>
<div class="a" style="left:696px;top:586px;width:1px;height:19px;background:#EFEFEF"></div>
<div class="a" style="left:790px;top:586px;width:1px;height:19px;background:#EFEFEF"></div>
<div class="a" style="left:862px;top:586px;width:1px;height:19px;background:#EFEFEF"></div>
<div class="a" style="left:1166px;top:586px;width:1px;height:19px;background:#EFEFEF"></div>
<div class="g" style="left:358.2px;top:591px">29768</div>
<div class="g" style="left:425.2px;top:591px">Zollstr 680</div>
<div class="g" style="left:519.2px;top:591px">Verkaufsabt...</div>
<div class="g" style="left:602.2px;top:591px">Berlin</div>
<div class="g" style="left:704.2px;top:591px">70</div>
<div class="g" style="left:798.2px;top:591px">12171</div>
<div class="g" style="left:870.2px;top:591px">0xE6100000010C00000000000000000000000000000000</div>
<div class="g" style="left:1174.2px;top:591px;letter-spacing:-0.25px">109268CF-68DA-4C87-A4E5-</div>
<div class="a" style="left:319px;top:605px;width:31px;height:19px;background:linear-gradient(135deg,#FCFCFC,#EDEDED);border-bottom:1px solid #CFCFCF"></div>
<div class="g" style="left:325.5px;top:610px">20</div>
<div class="a" style="left:350px;top:624px;width:962px;height:1px;background:#EFEFEF"></div>
<div class="a" style="left:417px;top:605px;width:1px;height:19px;background:#EFEFEF"></div>
<div class="a" style="left:511px;top:605px;width:1px;height:19px;background:#EFEFEF"></div>
<div class="a" style="left:594px;top:605px;width:1px;height:19px;background:#EFEFEF"></div>
<div class="a" style="left:696px;top:605px;width:1px;height:19px;background:#EFEFEF"></div>
<div class="a" style="left:790px;top:605px;width:1px;height:19px;background:#EFEFEF"></div>
<div class="a" style="left:862px;top:605px;width:1px;height:19px;background:#EFEFEF"></div>
<div class="a" style="left:1166px;top:605px;width:1px;height:19px;background:#EFEFEF"></div>
<div class="g" style="left:358.2px;top:610px">28560</div>
<div class="g" style="left:425.2px;top:610px">Zollstr 68</div>
<div class="g" style="left:519.2px;top:610px">Verkaufsabt...</div>
<div class="g" style="left:602.2px;top:610px">Darmstadt</div>
<div class="g" style="left:704.2px;top:610px">19</div>
<div class="g" style="left:798.2px;top:610px">64283</div>
<div class="g" style="left:870.2px;top:610px">0xE6100000010CB6FEA2D079E648400965A8D667502140</div>
<div class="g" style="left:1174.2px;top:610px;letter-spacing:-0.25px">60D444C7-DF7C-4B71-A108-</div>
<div class="a" style="left:1312px;top:226px;width:18px;height:401px;background:#EFEFEF;border-left:1px solid #E6E6E6"></div>
<div class="a" style="left:351px;top:245px;width:67px;height:20px;background:#E9ECF1;border:1px dotted #222"></div>
<div class="g" style="left:358.2px;top:249px">18050</div>
<svg style="left:1317px;top:234px" width="8" height="4"><path d="M0 4H8L4 0Z" fill="#404040"/></svg>
<div class="a" style="left:1314px;top:245px;width:14px;height:15px;background:linear-gradient(90deg,#F4F4F4,#D8D8D8);border:1px solid #A0A0A0;border-radius:2px"></div>
<svg style="left:1317px;top:617px" width="8" height="4"><path d="M0 0H8L4 4Z" fill="#404040"/></svg>
<div class="a" style="left:319px;top:627px;width:1012px;height:18px;background:#EFEFEF;border-top:1px solid #E6E6E6"></div>
<svg style="left:326px;top:632px" width="4" height="8"><path d="M4 0V8L0 4Z" fill="#404040"/></svg>
<div class="a" style="left:337px;top:628px;width:771px;height:15px;background:linear-gradient(#F4F4F4,#DCDCDC 60%,#CCCCCC);border:1px solid #A8A8A8;border-radius:2px"></div>
<svg style="left:718px;top:633px" width="6" height="7"><path d="M0.5 0v7M2.5 0v7M4.5 0v7" stroke="#555"/></svg>
<svg style="left:1301px;top:632px" width="4" height="8"><path d="M0 0V8L4 4Z" fill="#404040"/></svg>
<div class="a" style="left:1312px;top:627px;width:18px;height:18px;background:#F0F0F0"></div>
<div class="a" style="left:314px;top:647px;width:1020px;height:1px;background:#FFFFFF"></div>
<div class="a" style="left:314px;top:649px;width:1020px;height:24px;background:#F0E38A"></div>
<div class="a" style="left:314px;top:673px;width:1020px;height:3px;background:#FBF4D8"></div>
<svg style="left:317px;top:653px" width="16" height="16"><circle cx="8" cy="8" r="7.5" fill="#3E9E3E" stroke="#2A7A2A"/><circle cx="8" cy="6" r="5" fill="#6CC06C" opacity="0.6"/><path d="M4 8L7 11L12 5" stroke="#fff" stroke-width="2" fill="none"/></svg>
<div class="t" style="left:337px;top:654px;font-size:11.7px">Query executed successfully.</div>
<div class="a" style="left:806px;top:652px;width:1px;height:18px;background:#C8BC70;border-right:1px solid #FFF6C0"></div>
<div class="a" style="left:941px;top:652px;width:1px;height:18px;background:#C8BC70;border-right:1px solid #FFF6C0"></div>
<div class="a" style="left:1072px;top:652px;width:1px;height:18px;background:#C8BC70;border-right:1px solid #FFF6C0"></div>
<div class="a" style="left:1197px;top:652px;width:1px;height:18px;background:#C8BC70;border-right:1px solid #FFF6C0"></div>
<div class="a" style="left:1252px;top:652px;width:1px;height:18px;background:#C8BC70;border-right:1px solid #FFF6C0"></div>
<div class="t" style="left:1078px;top:654px;font-size:11.7px">AdventureWorks2012</div>
<div class="t" style="left:1202px;top:654px;font-size:11.7px">00:00:00</div>
<div class="t" style="left:1257px;top:654px;font-size:11.7px">19614 rows</div>
<div class="t" style="left:0px;top:687px;font-size:11px;color:#E4E9F1">Ready</div>
<div class="t" style="left:1007px;top:687px;font-size:11px;color:#E4E9F1">Ln 3</div>
<div class="t" style="left:1099px;top:687px;font-size:11px;color:#E4E9F1">Col 1</div>
<div class="t" style="left:1191px;top:687px;font-size:11px;color:#E4E9F1">Ch 1</div>
<div class="t" style="left:1326px;top:687px;font-size:11px;color:#E4E9F1">INS</div>
<div class="a" style="left:1340px;top:78px;width:20px;height:78px;background:#3D5174;border:1px solid #4C6085;border-right:none;border-radius:2px 0 0 2px"></div>
<svg style="left:1343px;top:81px" width="16" height="15"><rect x="0.5" y="0.5" width="9" height="12" fill="#fff" stroke="#8090A8"/><path d="M2 3h2M2 6h2M2 9h2" stroke="#4F6FA8"/><path d="M8 6Q12 3 15 8L14 14H9Z" fill="#E8C040"/></svg>
<div class="t" style="left:1343px;top:99px;color:#fff;font-size:11.7px;writing-mode:vertical-rl">Properties</div>
<svg style="left:405px;top:78px" width="140" height="24"><path d="M2 4Q3 2 30 2Q70 0.5 110 2Q136 1.5 137 4L137 10.5L130 11L129 16Q100 19 70 21.5Q40 20.5 20 17.5L3 17Q1 10 2 4Z" fill="#0000F0"/></svg>
<svg style="left:809px;top:651px" width="130" height="24"><path d="M1 5Q20 2 50 4Q80 0 110 2Q126 2 126 6Q127 16 124 20Q100 21 70 19Q40 23 6 22Q0 18 1 5Z" fill="#0000F0"/></svg>
<svg style="left:946px;top:650px" width="126" height="24"><path d="M2 5Q30 1 60 4Q90 0 118 3Q123 5 122 12Q124 20 116 21Q80 22 50 21Q20 24 4 22Q0 16 2 5Z" fill="#0000F0"/></svg>
<svg style="left:0;top:0" width="1360" height="704">
<path fill="none" stroke="#E31B1B" stroke-width="2.2" stroke-linecap="round" stroke-linejoin="round" d="M528.0 111.0 C527.1 110.3 520.9 108.3 522.9 106.8 C524.9 105.3 532.0 103.6 539.8 101.9 C547.6 100.2 558.7 98.3 569.6 96.9 C580.5 95.5 597.4 93.8 605.3 93.3 C613.2 92.8 609.9 94.3 617.2 93.9 C624.5 93.5 637.8 91.2 649.0 91.0 C660.2 90.8 674.8 91.4 684.7 92.9 C694.6 94.4 699.6 98.2 708.5 99.9 C717.4 101.6 729.4 101.4 738.3 102.9 C747.2 104.4 757.4 106.7 762.1 108.8 C766.8 110.9 766.3 113.0 766.5 115.3 C766.7 117.6 766.0 121.0 763.2 122.6 C760.5 124.1 755.8 124.1 750.0 124.6 C744.2 125.1 735.3 124.9 728.4 125.7 C721.5 126.5 714.1 126.9 708.5 129.7 C702.9 132.5 698.2 139.9 694.6 142.6 C691.0 145.2 697.6 145.6 686.7 145.6 C675.8 145.6 645.3 144.1 629.1 142.6 C612.9 141.1 602.6 139.6 589.4 136.6 C576.2 133.6 560.3 129.0 549.7 124.7 C539.1 120.4 530.4 113.8 525.9 110.8 C521.4 107.8 523.4 107.5 522.9 106.8"/>
<path fill="none" stroke="#E31B1B" stroke-width="2.2" stroke-linecap="round" stroke-linejoin="round" d="M760.6 125.2 C763.2 125.4 769.5 124.6 776.5 126.5 C783.5 128.4 794.1 133.2 802.9 136.5 C811.7 139.8 820.6 144.4 829.4 146.4 C838.2 148.4 851.0 148.5 855.9 148.4 C860.8 148.3 858.1 146.1 858.5 145.7"/>
<path fill="none" stroke="#E31B1B" stroke-width="2.2" stroke-linecap="round" stroke-linejoin="round" d="M853.2 139.8 C854.3 139.9 856.7 139.1 859.8 140.4 C862.9 141.7 872.0 144.7 871.8 147.7 C871.6 150.7 860.7 156.5 858.5 158.3"/>
<path fill="none" stroke="#E31B1B" stroke-width="2.2" stroke-linecap="round" stroke-linejoin="round" d="M895.6 131.2 C896.5 134.8 900.0 149.4 900.9 153.0"/>
<path fill="none" stroke="#E31B1B" stroke-width="2.2" stroke-linecap="round" stroke-linejoin="round" d="M889.0 140.4 C890.1 139.1 892.5 134.5 895.6 132.5 C898.7 130.5 904.0 128.7 907.5 128.5 C911.0 128.3 914.4 129.2 916.8 131.2 C919.2 133.2 921.4 137.3 922.0 140.4 C922.6 143.5 922.5 146.8 920.7 149.7 C919.0 152.6 915.7 155.2 911.5 157.6 C907.3 160.0 900.4 162.2 895.6 164.3 C890.9 166.4 885.1 169.2 883.0 170.2"/>
<path fill="none" stroke="#E31B1B" stroke-width="2.2" stroke-linecap="round" stroke-linejoin="round" d="M928.8 135.4 C929.7 135.3 933.3 135.2 934.4 134.8 C935.5 134.4 935.5 133.6 935.1 133.2 C934.7 132.8 933.2 132.1 932.2 132.2 C931.2 132.3 930.0 132.5 929.3 133.7 C928.6 134.9 928.1 137.1 928.2 139.2 C928.3 141.2 928.9 144.1 930.1 146.0 C931.3 147.9 933.6 149.8 935.2 150.7 C936.8 151.6 938.3 151.8 939.9 151.2 C941.5 150.6 943.0 148.9 944.6 146.9 C946.2 144.9 948.9 140.5 949.7 139.2"/>
<path fill="none" stroke="#E31B1B" stroke-width="2.2" stroke-linecap="round" stroke-linejoin="round" d="M950.6 125.6 C950.0 125.4 948.2 124.3 947.2 124.7 C946.2 125.1 944.5 127.0 944.6 128.1 C944.7 129.2 945.6 130.8 948.0 131.5 C950.4 132.2 956.2 132.0 959.1 132.4 C962.0 132.8 964.0 132.8 965.1 134.1 C966.2 135.4 966.2 138.8 965.9 140.1 C965.6 141.4 964.8 141.8 963.4 142.2 C962.0 142.5 958.4 142.2 957.4 142.2"/>
<path fill="none" stroke="#E31B1B" stroke-width="2.2" stroke-linecap="round" stroke-linejoin="round" d="M971.9 115.3 C971.5 116.2 969.7 118.4 969.3 120.5 C968.9 122.6 968.7 126.3 969.3 128.1 C969.9 129.9 971.1 131.0 972.7 131.5 C974.3 132.0 977.4 131.7 978.7 131.1 C980.1 130.5 980.4 128.6 980.8 128.1"/>
<path fill="none" stroke="#E31B1B" stroke-width="2.2" stroke-linecap="round" stroke-linejoin="round" d="M984.7 118.8 C986.0 118.1 991.2 115.5 992.3 114.5 C993.4 113.5 992.8 113.0 991.5 112.8 C990.2 112.6 986.0 112.6 984.7 113.6 C983.4 114.6 983.5 116.5 983.8 118.8 C984.1 121.1 985.0 124.8 986.4 127.3 C987.8 129.8 990.4 133.0 992.3 134.1 C994.1 135.2 995.8 134.9 997.5 134.1 C999.2 133.2 1001.8 129.8 1002.6 129.0"/>
<path fill="none" stroke="#E31B1B" stroke-width="2.2" stroke-linecap="round" stroke-linejoin="round" d="M1001.7 117.9 C1003.1 117.6 1008.0 116.8 1010.3 115.8 C1012.6 114.8 1013.8 112.9 1015.4 111.9 C1017.0 110.9 1018.0 109.8 1019.6 109.8 C1021.2 109.8 1022.9 109.8 1024.7 111.9 C1026.5 114.0 1029.7 120.5 1030.7 122.2"/>
<path fill="none" stroke="#E31B1B" stroke-width="2.2" stroke-linecap="round" stroke-linejoin="round" d="M1046.7 116.4 C1046.5 115.8 1047.4 113.3 1045.8 112.8 C1044.2 112.2 1038.8 111.7 1037.2 113.1 C1035.6 114.5 1035.7 118.7 1036.0 121.3 C1036.3 123.9 1037.4 127.1 1039.0 128.7 C1040.6 130.3 1043.8 131.3 1045.8 131.1 C1047.8 130.9 1049.2 129.6 1050.7 127.4 C1052.2 125.2 1054.0 121.0 1054.9 117.7 C1055.8 114.5 1056.4 110.2 1056.2 107.9 C1056.0 105.7 1056.1 105.7 1053.7 104.2 C1051.3 102.7 1044.2 99.2 1042.1 98.7 C1040.0 98.2 1040.7 99.6 1041.2 101.2 C1041.7 102.8 1043.1 105.9 1045.2 108.5 C1047.3 111.1 1051.6 114.9 1053.7 117.0 C1055.8 119.1 1056.5 120.4 1058.0 121.3 C1059.5 122.2 1062.1 122.0 1062.9 122.2"/>
<path fill="none" stroke="#E31B1B" stroke-width="2.2" stroke-linecap="round" stroke-linejoin="round" d="M1067.8 110.3 C1067.7 112.0 1066.6 118.5 1066.9 120.5 C1067.2 122.5 1068.2 122.3 1069.5 122.6 C1070.8 122.9 1073.4 123.2 1074.8 122.4 C1076.2 121.6 1077.4 119.2 1078.1 117.7 C1078.8 116.2 1078.7 114.1 1078.8 113.4"/>
<path fill="none" stroke="#E31B1B" stroke-width="2.2" stroke-linecap="round" stroke-linejoin="round" d="M1069.6 104.2 C1070.2 104.0 1072.1 103.9 1073.3 103.0 C1074.5 102.1 1076.6 99.8 1076.9 98.7 C1077.2 97.6 1075.7 96.8 1075.1 96.6 C1074.5 96.4 1073.6 97.3 1073.3 97.5"/>
<path fill="none" stroke="#E31B1B" stroke-width="2.2" stroke-linecap="round" stroke-linejoin="round" d="M1085.3 115.4 C1085.5 114.7 1085.6 112.0 1086.3 111.0 C1087.0 110.0 1088.4 109.5 1089.5 109.7 C1090.6 109.9 1092.0 110.7 1092.7 112.3 C1093.5 113.9 1093.6 117.5 1094.0 119.3 C1094.4 121.1 1094.7 122.7 1095.3 123.1 C1095.9 123.5 1097.5 123.0 1097.8 121.8 C1098.1 120.6 1097.7 117.8 1097.2 116.1 C1096.7 114.4 1094.7 112.7 1094.6 111.6 C1094.5 110.5 1095.5 109.9 1096.5 109.7 C1097.5 109.5 1099.2 109.3 1100.4 110.3 C1101.6 111.2 1102.5 113.7 1103.6 115.4 C1104.7 117.1 1105.8 119.7 1106.8 120.6 C1107.8 121.5 1108.8 120.9 1109.3 120.6 C1109.8 120.3 1109.5 119.3 1109.6 119.0"/>
<path fill="none" stroke="#E31B1B" stroke-width="2.2" stroke-linecap="round" stroke-linejoin="round" d="M1115.7 103.3 C1115.5 104.0 1114.5 106.4 1114.4 107.8 C1114.3 109.2 1114.2 111.2 1115.1 111.9 C1115.9 112.7 1118.0 112.7 1119.5 112.3 C1121.0 111.9 1123.0 110.8 1124.0 109.7 C1125.0 108.6 1125.5 107.1 1125.6 105.9 C1125.7 104.7 1124.8 103.2 1124.6 102.7"/>
<path fill="none" stroke="#E31B1B" stroke-width="2.2" stroke-linecap="round" stroke-linejoin="round" d="M1125.3 103.3 C1126.2 105.0 1129.1 110.6 1130.4 113.5 C1131.7 116.4 1133.0 118.8 1133.0 120.6 C1133.0 122.4 1132.1 123.0 1130.4 124.4 C1128.7 125.8 1125.2 127.5 1122.7 128.9 C1120.2 130.3 1117.3 131.6 1115.1 132.7 C1112.9 133.8 1110.3 134.9 1109.3 135.3"/>
<path fill="none" stroke="#E31B1B" stroke-width="2.2" stroke-linecap="round" stroke-linejoin="round" d="M1010.3 116.2 L1010.3 127.3 L1017.1 127.3 L1015.4 120.5 Z"/>
<circle cx="1067.8" cy="111.5" r="1.7" fill="#E31B1B"/>
</svg>
</body></html>
